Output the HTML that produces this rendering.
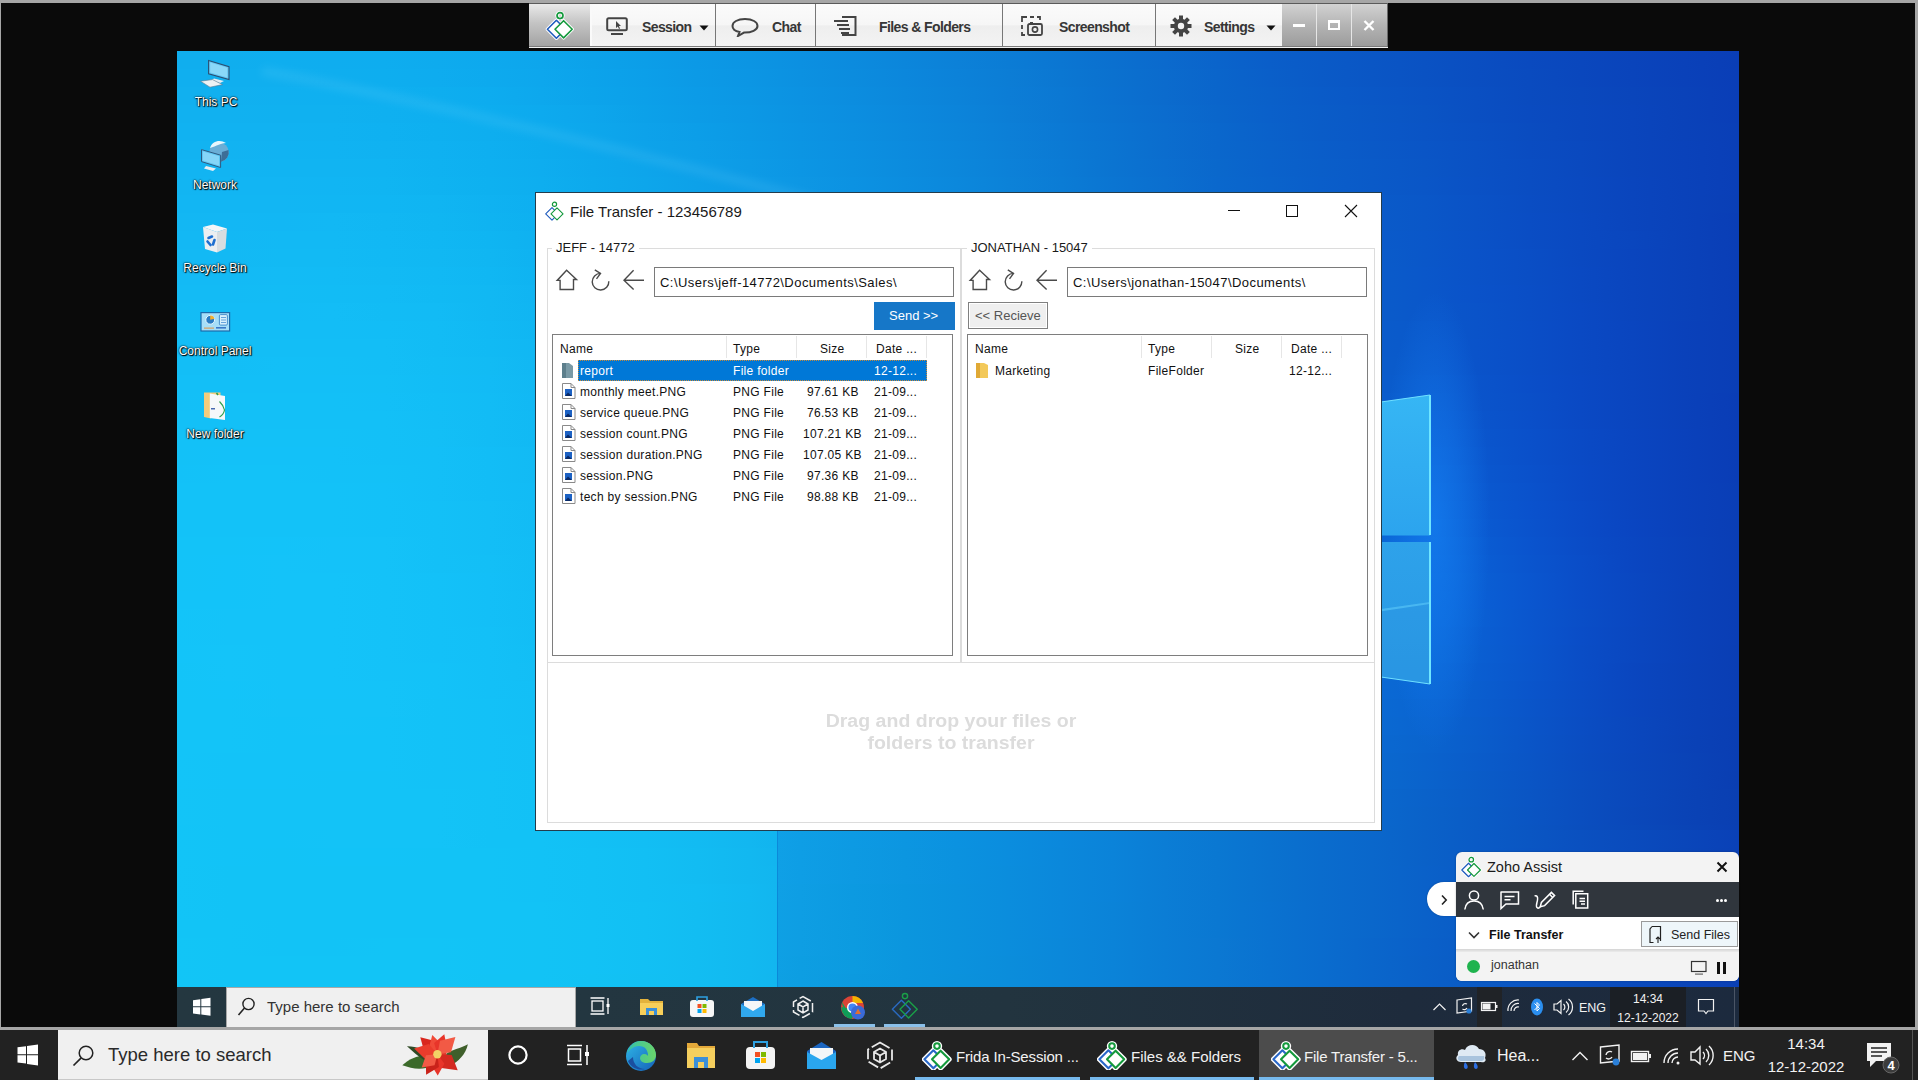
<!DOCTYPE html>
<html><head><meta charset="utf-8">
<style>
*{margin:0;padding:0;box-sizing:border-box}
html,body{width:1918px;height:1080px;overflow:hidden;background:#a6a6a6;font-family:"Liberation Sans",sans-serif}
.a{position:absolute}
svg{display:block}
#black{left:1px;top:3px;width:1914px;height:1024px;background:#0a0a0a}
#desk{left:177px;top:51px;width:1562px;height:936px;overflow:hidden}
#ltb{left:0;top:1030px;width:1918px;height:50px;background:#1f1f1f}
#rtb{left:177px;top:987px;width:1562px;height:40px;background:linear-gradient(90deg,#243842 0,#243944 700px,#1f3246 1150px,#1c2a3e 1562px)}
.t{white-space:nowrap;line-height:1}
</style></head><body>
<svg width="0" height="0" style="position:absolute">
 <defs>
  <symbol id="zlogo" viewBox="0 0 30 32">
   <circle cx="15" cy="7.6" r="3" fill="none" stroke="#fff" stroke-width="3.4"/>
   <path d="M2.4 21.3 L11.4 12.3 L20.4 21.3 L11.4 30.3 Z" fill="#fff" stroke="#fff" stroke-width="3.4" stroke-linejoin="round"/>
   <path d="M10 21.3 L18.6 12.7 L27.2 21.3 L18.6 29.9 Z" fill="#fff" stroke="#fff" stroke-width="3.4" stroke-linejoin="round"/>
   <circle cx="15" cy="7.6" r="3" fill="none" stroke="#14993c" stroke-width="1.7"/>
   <path d="M2.4 21.3 L11.4 12.3 L20.4 21.3 L11.4 30.3 Z" fill="none" stroke="#1f5bbd" stroke-width="1.6" stroke-linejoin="round"/>
   <path d="M10 21.3 L18.6 12.7 L27.2 21.3 L18.6 29.9 Z" fill="#fff" stroke="#14993c" stroke-width="1.6" stroke-linejoin="round"/>
  </symbol>
  <symbol id="zlogoT" viewBox="0 0 30 32">
   <circle cx="15" cy="8.1" r="3" fill="#fff" stroke="#fff" stroke-width="4.4"/>
   <path d="M2.4 21.3 L11.4 12.3 L20.4 21.3 L11.4 30.3 Z" fill="#fff" stroke="#fff" stroke-width="5" stroke-linejoin="round"/>
   <path d="M10 21.3 L18.6 12.7 L27.2 21.3 L18.6 29.9 Z" fill="#fff" stroke="#fff" stroke-width="5" stroke-linejoin="round"/>
   <circle cx="15" cy="8.1" r="2.8" fill="none" stroke="#14993c" stroke-width="2"/>
   <path d="M2.4 21.3 L11.4 12.3 L20.4 21.3 L11.4 30.3 Z" fill="none" stroke="#2a68c8" stroke-width="2.1" stroke-linejoin="round"/>
   <path d="M10 21.3 L18.6 12.7 L27.2 21.3 L18.6 29.9 Z" fill="#fff" stroke="#14993c" stroke-width="2.1" stroke-linejoin="round"/>
  </symbol>
  <symbol id="zlogoR" viewBox="0 0 30 32">
   <circle cx="15" cy="8.1" r="2.6" fill="none" stroke="#1aa048" stroke-width="1.4"/>
   <path d="M2.4 21.3 L11.4 12.3 L20.4 21.3 L11.4 30.3 Z" fill="none" stroke="#2a6ac0" stroke-width="1.4" stroke-linejoin="round"/>
   <path d="M10 21.3 L18.6 12.7 L27.2 21.3 L18.6 29.9 Z" fill="none" stroke="#1aa048" stroke-width="1.4" stroke-linejoin="round"/>
  </symbol>
 </defs>
</svg>
<div id="black" class="a"></div>

<!-- DESKTOP WALLPAPER -->
<div id="desk" class="a">
<div class="a" style="left:0;top:0px;width:1562px;height:18px;background:linear-gradient(90deg,#10aeee 0px,#10aeee 52px,#0faeef 104px,#0fadef 156px,#0eadef 208px,#0eabee 260px,#0da9ee 312px,#0da6ec 364px,#0ca2ea 416px,#0c9ee8 468px,#0c99e6 520px,#0c95e3 572px,#0c90e1 624px,#0c8bde 676px,#0c86db 728px,#0c81d8 780px,#0b7cd5 832px,#0b76d2 884px,#0b70cf 936px,#0b6acd 988px,#0a64cb 1040px,#0a5ec9 1092px,#0a5ac7 1144px,#0a56c5 1196px,#0a52c3 1248px,#0a4ec1 1300px,#0a4abf 1352px,#0a47bd 1404px,#0a44bb 1456px,#0a41b9 1508px,#0a3eb6 1560px,#0a3eb6 1562px)"></div>
<div class="a" style="left:0;top:18px;width:1562px;height:18px;background:linear-gradient(90deg,#10afef 0px,#10afef 52px,#10afef 104px,#0faeef 156px,#0eaeef 208px,#0eacef 260px,#0daaee 312px,#0da7ed 364px,#0ca3eb 416px,#0c9fe9 468px,#0c9ae6 520px,#0c96e4 572px,#0c91e1 624px,#0c8cde 676px,#0c87dc 728px,#0c82d9 780px,#0c7dd5 832px,#0b77d2 884px,#0b71cf 936px,#0b6bcd 988px,#0a65cb 1040px,#0a5fc9 1092px,#0a5ac7 1144px,#0a56c5 1196px,#0a52c3 1248px,#0a4ec1 1300px,#0a4bbf 1352px,#0a47bd 1404px,#0a44bb 1456px,#0a41b9 1508px,#0a3eb7 1560px,#0a3eb6 1562px)"></div>
<div class="a" style="left:0;top:36px;width:1562px;height:18px;background:linear-gradient(90deg,#11b0ef 0px,#11b0ef 52px,#10b0f0 104px,#0fb0f0 156px,#0faff0 208px,#0eaeef 260px,#0dacef 312px,#0da8ed 364px,#0ca4eb 416px,#0ca0e9 468px,#0c9be7 520px,#0c97e4 572px,#0c92e2 624px,#0c8ddf 676px,#0c88dc 728px,#0c83d9 780px,#0c7dd6 832px,#0b78d3 884px,#0b71d0 936px,#0b6bcd 988px,#0a65cb 1040px,#0a60c9 1092px,#0a5bc8 1144px,#0a57c6 1196px,#0a53c4 1248px,#0a4fc2 1300px,#0a4bbf 1352px,#0a48bd 1404px,#0a45bb 1456px,#0a42b9 1508px,#0a3eb7 1560px,#0a3eb7 1562px)"></div>
<div class="a" style="left:0;top:54px;width:1562px;height:18px;background:linear-gradient(90deg,#11b1f0 0px,#11b1f0 52px,#10b1f0 104px,#10b1f0 156px,#0fb0f0 208px,#0eaff0 260px,#0dadef 312px,#0daaee 364px,#0da6ec 416px,#0ca1e9 468px,#0c9ce7 520px,#0c98e5 572px,#0c93e2 624px,#0c8ee0 676px,#0c89dd 728px,#0c84da 780px,#0c7ed6 832px,#0b78d3 884px,#0b72d0 936px,#0b6cce 988px,#0a66cb 1040px,#0a60ca 1092px,#0a5cc8 1144px,#0a58c6 1196px,#0a54c4 1248px,#0a4fc2 1300px,#0a4bc0 1352px,#0a48be 1404px,#0a45bc 1456px,#0a42b9 1508px,#0a3eb7 1560px,#0a3eb7 1562px)"></div>
<div class="a" style="left:0;top:72px;width:1562px;height:18px;background:linear-gradient(90deg,#11b2f1 0px,#11b2f1 52px,#11b2f1 104px,#10b2f1 156px,#0fb1f1 208px,#0eb0f0 260px,#0eaeef 312px,#0dabee 364px,#0da7ec 416px,#0da2ea 468px,#0c9ee8 520px,#0c99e5 572px,#0c94e3 624px,#0c8fe0 676px,#0c8add 728px,#0c85da 780px,#0c7fd7 832px,#0b79d4 884px,#0b73d1 936px,#0b6dce 988px,#0a67cc 1040px,#0a61ca 1092px,#0a5cc8 1144px,#0a58c7 1196px,#0a54c5 1248px,#0a50c3 1300px,#0a4cc0 1352px,#0a48be 1404px,#0a45bc 1456px,#0a42b9 1508px,#0a3fb7 1560px,#0a3eb7 1562px)"></div>
<div class="a" style="left:0;top:90px;width:1562px;height:18px;background:linear-gradient(90deg,#12b3f1 0px,#12b3f1 52px,#11b3f2 104px,#10b3f2 156px,#10b2f1 208px,#0fb1f1 260px,#0eaff0 312px,#0dacee 364px,#0da8ed 416px,#0da3ea 468px,#0d9fe8 520px,#0c9ae6 572px,#0c95e3 624px,#0c90e1 676px,#0c8bde 728px,#0c86db 780px,#0c80d7 832px,#0b7ad4 884px,#0b74d1 936px,#0b6dce 988px,#0a67cc 1040px,#0a62ca 1092px,#0a5dc9 1144px,#0a59c7 1196px,#0a55c6 1248px,#0a51c4 1300px,#0a4cc1 1352px,#0a49bf 1404px,#0a45bc 1456px,#0a42ba 1508px,#0a3fb7 1560px,#0a3eb7 1562px)"></div>
<div class="a" style="left:0;top:108px;width:1562px;height:18px;background:linear-gradient(90deg,#12b4f2 0px,#12b4f2 52px,#11b4f2 104px,#11b4f2 156px,#10b4f2 208px,#0fb2f1 260px,#0eb0f0 312px,#0eadef 364px,#0da9ed 416px,#0da5eb 468px,#0da0e9 520px,#0d9be6 572px,#0c96e4 624px,#0c91e1 676px,#0c8cde 728px,#0c87db 780px,#0c81d8 832px,#0b7bd5 884px,#0b74d1 936px,#0b6ecf 988px,#0a68cc 1040px,#0a62cb 1092px,#0a5ec9 1144px,#0a5ac8 1196px,#0a56c6 1248px,#0a51c4 1300px,#0a4dc2 1352px,#0a49bf 1404px,#0a45bc 1456px,#0a42ba 1508px,#0a3fb7 1560px,#0a3eb6 1562px)"></div>
<div class="a" style="left:0;top:126px;width:1562px;height:18px;background:linear-gradient(90deg,#12b5f2 0px,#12b5f3 52px,#12b5f3 104px,#11b5f3 156px,#10b5f2 208px,#0fb3f1 260px,#0eb1f0 312px,#0eaeef 364px,#0daaed 416px,#0da6eb 468px,#0da1e9 520px,#0d9ce7 572px,#0d97e4 624px,#0c92e2 676px,#0c8ddf 728px,#0c88dc 780px,#0c82d8 832px,#0b7cd5 884px,#0b75d2 936px,#0b6fcf 988px,#0a68cd 1040px,#0a63cb 1092px,#0a5eca 1144px,#0a5ac8 1196px,#0a56c7 1248px,#0a51c5 1300px,#0a4dc2 1352px,#0a49c0 1404px,#0a45bd 1456px,#0a42ba 1508px,#0a3fb7 1560px,#0a3eb6 1562px)"></div>
<div class="a" style="left:0;top:144px;width:1562px;height:18px;background:linear-gradient(90deg,#12b6f3 0px,#12b6f3 52px,#12b6f3 104px,#11b6f3 156px,#10b6f3 208px,#10b5f2 260px,#0fb2f1 312px,#0eaff0 364px,#0eabee 416px,#0da7ec 468px,#0da2ea 520px,#0d9de7 572px,#0d98e5 624px,#0d93e2 676px,#0c8edf 728px,#0c89dc 780px,#0c83d9 832px,#0c7cd5 884px,#0b76d2 936px,#0b6fcf 988px,#0a69cd 1040px,#0a64cb 1092px,#0a5fca 1144px,#0a5bc9 1196px,#0a57c8 1248px,#0a52c6 1300px,#0a4dc3 1352px,#0a49c0 1404px,#0a45bd 1456px,#0a42ba 1508px,#0a3fb6 1560px,#0a3eb6 1562px)"></div>
<div class="a" style="left:0;top:162px;width:1562px;height:18px;background:linear-gradient(90deg,#13b7f3 0px,#13b7f4 52px,#12b7f4 104px,#12b8f4 156px,#11b7f3 208px,#10b6f2 260px,#0fb3f1 312px,#0eb0f0 364px,#0eacee 416px,#0ea8ec 468px,#0da3ea 520px,#0d9ee8 572px,#0d99e5 624px,#0d94e3 676px,#0c8fe0 728px,#0c8add 780px,#0c84d9 832px,#0c7dd6 884px,#0b76d3 936px,#0b70d0 988px,#0a6acd 1040px,#0a64cb 1092px,#0a5fca 1144px,#0a5bc9 1196px,#0a57c8 1248px,#0a52c6 1300px,#0a4dc4 1352px,#0a49c1 1404px,#0a45bd 1456px,#0a42ba 1508px,#0a3eb6 1560px,#0a3eb6 1562px)"></div>
<div class="a" style="left:0;top:180px;width:1562px;height:18px;background:linear-gradient(90deg,#13b8f4 0px,#13b8f4 52px,#12b9f4 104px,#12b9f4 156px,#11b8f4 208px,#10b7f3 260px,#0fb5f2 312px,#0fb1f0 364px,#0eadef 416px,#0ea9ed 468px,#0da4eb 520px,#0d9fe8 572px,#0d9ae6 624px,#0d95e3 676px,#0c90e0 728px,#0c8add 780px,#0c84da 832px,#0c7ed6 884px,#0b77d3 936px,#0b70d0 988px,#0a6acd 1040px,#0a64cb 1092px,#0a60ca 1144px,#0a5bca 1196px,#0a57c9 1248px,#0a52c7 1300px,#0a4dc4 1352px,#0a49c1 1404px,#0a46be 1456px,#0a42ba 1508px,#0a3eb6 1560px,#0a3eb6 1562px)"></div>
<div class="a" style="left:0;top:198px;width:1562px;height:18px;background:linear-gradient(90deg,#13b9f4 0px,#13b9f4 52px,#12baf4 104px,#12baf4 156px,#11b9f4 208px,#11b8f3 260px,#10b6f2 312px,#0fb2f1 364px,#0eaeef 416px,#0eaaed 468px,#0ea5eb 520px,#0da0e9 572px,#0d9be6 624px,#0d96e3 676px,#0c91e1 728px,#0c8bde 780px,#0c85da 832px,#0c7fd7 884px,#0b78d3 936px,#0b71d0 988px,#0a6acd 1040px,#0a65cb 1092px,#0a60ca 1144px,#0a5cca 1196px,#0a57c9 1248px,#0a52c8 1300px,#0a4ec5 1352px,#0a49c1 1404px,#0a45be 1456px,#0a42ba 1508px,#0a3eb6 1560px,#0a3eb6 1562px)"></div>
<div class="a" style="left:0;top:216px;width:1562px;height:18px;background:linear-gradient(90deg,#13baf5 0px,#13baf5 52px,#13bbf5 104px,#12bbf5 156px,#12baf4 208px,#11b9f4 260px,#10b7f3 312px,#0fb3f1 364px,#0fafef 416px,#0eabee 468px,#0ea6eb 520px,#0da1e9 572px,#0d9ce7 624px,#0d97e4 676px,#0d92e1 728px,#0c8cde 780px,#0c86db 832px,#0c7fd7 884px,#0b78d4 936px,#0b71d0 988px,#0a6bce 1040px,#0a65cc 1092px,#0a60cb 1144px,#0a5cca 1196px,#0a57ca 1248px,#0a52c8 1300px,#0a4ec5 1352px,#0a49c2 1404px,#0a45be 1456px,#0a42ba 1508px,#0a3eb6 1560px,#0a3eb6 1562px)"></div>
<div class="a" style="left:0;top:234px;width:1562px;height:18px;background:linear-gradient(90deg,#13bbf5 0px,#13bbf5 52px,#13bcf5 104px,#12bcf5 156px,#12bbf5 208px,#11baf4 260px,#11b8f3 312px,#10b4f2 364px,#0fb0f0 416px,#0eacee 468px,#0ea7ec 520px,#0da2e9 572px,#0d9de7 624px,#0d98e4 676px,#0d92e2 728px,#0c8ddf 780px,#0c87db 832px,#0c80d8 884px,#0b79d4 936px,#0b72d0 988px,#0a6bce 1040px,#0a65cc 1092px,#0a60cb 1144px,#0a5cca 1196px,#0a57ca 1248px,#0a52c9 1300px,#0a4ec6 1352px,#0a49c2 1404px,#0a45be 1456px,#0a42ba 1508px,#0a3eb6 1560px,#0a3eb6 1562px)"></div>
<div class="a" style="left:0;top:252px;width:1562px;height:18px;background:linear-gradient(90deg,#13bcf5 0px,#13bcf6 52px,#13bcf6 104px,#13bdf6 156px,#12bcf5 208px,#12bbf5 260px,#11b8f3 312px,#10b5f2 364px,#0fb1f0 416px,#0fadee 468px,#0ea8ec 520px,#0ea3ea 572px,#0d9ee7 624px,#0d98e5 676px,#0d93e2 728px,#0c8ddf 780px,#0c87dc 832px,#0c80d8 884px,#0b79d4 936px,#0b72d1 988px,#0a6cce 1040px,#0a66cc 1092px,#0a60cb 1144px,#0a5cca 1196px,#0a57ca 1248px,#0a53c9 1300px,#0a4ec6 1352px,#0a49c3 1404px,#0a45be 1456px,#0a42ba 1508px,#0a3eb6 1560px,#0a3eb6 1562px)"></div>
<div class="a" style="left:0;top:270px;width:1562px;height:18px;background:linear-gradient(90deg,#13bdf6 0px,#13bdf6 52px,#13bdf6 104px,#13bdf6 156px,#12bdf6 208px,#12bcf5 260px,#11b9f4 312px,#10b6f2 364px,#0fb2f1 416px,#0fadef 468px,#0ea9ec 520px,#0ea4ea 572px,#0d9ee8 624px,#0d99e5 676px,#0d94e2 728px,#0c8edf 780px,#0c88dc 832px,#0c81d8 884px,#0b7ad4 936px,#0b73d1 988px,#0a6cce 1040px,#0a66cc 1092px,#0a61cb 1144px,#0a5ccb 1196px,#0a58cb 1248px,#0a53c9 1300px,#0a4ec7 1352px,#0a49c3 1404px,#0a45bf 1456px,#0a41ba 1508px,#0a3eb6 1560px,#0a3eb6 1562px)"></div>
<div class="a" style="left:0;top:288px;width:1562px;height:18px;background:linear-gradient(90deg,#13bdf6 0px,#13bef6 52px,#13bef6 104px,#13bef6 156px,#13bef6 208px,#12bcf5 260px,#11baf4 312px,#11b7f3 364px,#10b3f1 416px,#0faeef 468px,#0ea9ed 520px,#0ea4ea 572px,#0d9fe8 624px,#0d9ae5 676px,#0d94e2 728px,#0c8edf 780px,#0c88dc 832px,#0c81d8 884px,#0b7ad5 936px,#0b73d1 988px,#0a6cce 1040px,#0a66cc 1092px,#0a61cb 1144px,#0a5ccb 1196px,#0a58cb 1248px,#0a53ca 1300px,#0a4ec7 1352px,#0a49c3 1404px,#0a45bf 1456px,#0a41ba 1508px,#0a3eb6 1560px,#0a3eb6 1562px)"></div>
<div class="a" style="left:0;top:306px;width:1562px;height:18px;background:linear-gradient(90deg,#13bef6 0px,#13bef6 52px,#13bff7 104px,#13bff6 156px,#13bef6 208px,#12bdf5 260px,#12bbf4 312px,#11b7f3 364px,#10b3f1 416px,#0fafef 468px,#0faaed 520px,#0ea5eb 572px,#0da0e8 624px,#0d9ae6 676px,#0d95e3 728px,#0c8fe0 780px,#0c89dc 832px,#0b82d9 884px,#0b7bd5 936px,#0b74d1 988px,#0a6dce 1040px,#0a66cc 1092px,#0a61cb 1144px,#0a5dcb 1196px,#0a58cb 1248px,#0a53ca 1300px,#0a4ec7 1352px,#0a49c3 1404px,#0a45bf 1456px,#0a41ba 1508px,#0a3eb6 1560px,#0a3db6 1562px)"></div>
<div class="a" style="left:0;top:324px;width:1562px;height:18px;background:linear-gradient(90deg,#13bff7 0px,#13bff7 52px,#13bff7 104px,#13bff7 156px,#13bff6 208px,#12bdf6 260px,#12bbf5 312px,#11b8f3 364px,#10b4f2 416px,#0faff0 468px,#0fabed 520px,#0ea6eb 572px,#0ea0e9 624px,#0d9be6 676px,#0d95e3 728px,#0c8fe0 780px,#0c89dc 832px,#0b82d9 884px,#0b7bd5 936px,#0b74d2 988px,#0a6dcf 1040px,#0a67cc 1092px,#0a62cc 1144px,#0a5dcc 1196px,#0a59cc 1248px,#0a54cb 1300px,#0a4ec8 1352px,#0a49c4 1404px,#0a45bf 1456px,#0a41ba 1508px,#0a3eb6 1560px,#0a3db6 1562px)"></div>
<div class="a" style="left:0;top:342px;width:1562px;height:18px;background:linear-gradient(90deg,#13bff7 0px,#13c0f7 52px,#13c0f7 104px,#13c0f7 156px,#13bff7 208px,#12bef6 260px,#12bcf5 312px,#11b8f4 364px,#10b4f2 416px,#10b0f0 468px,#0fabee 520px,#0ea6eb 572px,#0ea1e9 624px,#0d9ce6 676px,#0d96e3 728px,#0c90e0 780px,#0c89dd 832px,#0b83d9 884px,#0b7cd5 936px,#0b75d2 988px,#0a6ecf 1040px,#0a67cd 1092px,#0a62cc 1144px,#0a5ecd 1196px,#0a5acd 1248px,#0a54cb 1300px,#0a4fc8 1352px,#0a49c4 1404px,#0a45bf 1456px,#0a41ba 1508px,#0a3db6 1560px,#0a3db6 1562px)"></div>
<div class="a" style="left:0;top:360px;width:1562px;height:18px;background:linear-gradient(90deg,#13c0f7 0px,#13c0f7 52px,#13c0f7 104px,#13c0f7 156px,#13c0f7 208px,#13bef6 260px,#12bcf5 312px,#11b9f4 364px,#10b5f2 416px,#10b1f0 468px,#0facee 520px,#0ea7ec 572px,#0ea2e9 624px,#0d9ce6 676px,#0d96e3 728px,#0c90e0 780px,#0c8add 832px,#0b83d9 884px,#0b7cd6 936px,#0b75d3 988px,#0a6fd0 1040px,#0a68ce 1092px,#0a63cd 1144px,#0a5fce 1196px,#0a5ace 1248px,#0a55cc 1300px,#0a4fc9 1352px,#0a49c4 1404px,#0a45bf 1456px,#0a41ba 1508px,#0a3db6 1560px,#0a3db6 1562px)"></div>
<div class="a" style="left:0;top:378px;width:1562px;height:18px;background:linear-gradient(90deg,#13c1f7 0px,#13c1f7 52px,#13c1f7 104px,#13c1f7 156px,#13c0f7 208px,#13bff6 260px,#12bcf5 312px,#11b9f4 364px,#11b6f2 416px,#10b1f0 468px,#0fadee 520px,#0ea7ec 572px,#0ea2e9 624px,#0d9de6 676px,#0d97e3 728px,#0c91e0 780px,#0c8add 832px,#0b83d9 884px,#0b7dd6 936px,#0b76d3 988px,#0a6fd0 1040px,#0a69cf 1092px,#0a64ce 1144px,#0a60cf 1196px,#0a5bcf 1248px,#0a56cd 1300px,#0a50ca 1352px,#0a4ac5 1404px,#0a45c0 1456px,#0a41bb 1508px,#0a3db6 1560px,#0a3db6 1562px)"></div>
<div class="a" style="left:0;top:396px;width:1562px;height:18px;background:linear-gradient(90deg,#13c1f7 0px,#13c1f8 52px,#13c1f8 104px,#13c1f8 156px,#13c0f7 208px,#13bff7 260px,#12bdf6 312px,#12baf4 364px,#11b6f3 416px,#10b2f1 468px,#0fadee 520px,#0ea8ec 572px,#0ea3e9 624px,#0d9de7 676px,#0d97e4 728px,#0c91e0 780px,#0c8bdd 832px,#0b84da 884px,#0b7dd6 936px,#0b76d4 988px,#0a70d1 1040px,#0a6acf 1092px,#0a65cf 1144px,#0a61d0 1196px,#0a5cd0 1248px,#0a57ce 1300px,#0a50ca 1352px,#0a4ac5 1404px,#0a45c0 1456px,#0a41bb 1508px,#0a3db6 1560px,#0a3db6 1562px)"></div>
<div class="a" style="left:0;top:414px;width:1562px;height:18px;background:linear-gradient(90deg,#13c1f8 0px,#13c2f8 52px,#13c2f8 104px,#13c1f8 156px,#13c1f7 208px,#13bff7 260px,#12bdf6 312px,#12baf4 364px,#11b7f3 416px,#10b2f1 468px,#0faeef 520px,#0fa9ec 572px,#0ea3ea 624px,#0d9de7 676px,#0d98e4 728px,#0c91e1 780px,#0c8bdd 832px,#0b84da 884px,#0b7ed7 936px,#0b77d4 988px,#0a71d2 1040px,#0a6bd1 1092px,#0a67d0 1144px,#0a62d1 1196px,#0a5ed1 1248px,#0a58cf 1300px,#0a51cb 1352px,#0a4ac6 1404px,#0a45c0 1456px,#0a41bb 1508px,#0a3db6 1560px,#0a3db6 1562px)"></div>
<div class="a" style="left:0;top:432px;width:1562px;height:18px;background:linear-gradient(90deg,#13c2f8 0px,#13c2f8 52px,#13c2f8 104px,#13c2f8 156px,#13c1f8 208px,#13bff7 260px,#12bdf6 312px,#12bbf5 364px,#11b7f3 416px,#10b3f1 468px,#0faeef 520px,#0fa9ec 572px,#0ea4ea 624px,#0d9ee7 676px,#0d98e4 728px,#0c92e1 780px,#0c8bdd 832px,#0b85da 884px,#0b7ed7 936px,#0b78d5 988px,#0a72d3 1040px,#0a6cd2 1092px,#0a68d1 1144px,#0a64d2 1196px,#0a5fd2 1248px,#0a59d0 1300px,#0a52cc 1352px,#0a4ac6 1404px,#0a45c0 1456px,#0a41bb 1508px,#0a3eb6 1560px,#0a3db5 1562px)"></div>
<div class="a" style="left:0;top:450px;width:1562px;height:18px;background:linear-gradient(90deg,#13c2f8 0px,#13c2f8 52px,#13c2f8 104px,#13c2f8 156px,#13c1f8 208px,#13c0f7 260px,#13bef6 312px,#12bbf5 364px,#11b7f3 416px,#10b3f1 468px,#10afef 520px,#0faaed 572px,#0ea4ea 624px,#0d9ee7 676px,#0d98e4 728px,#0c92e1 780px,#0c8cde 832px,#0b85da 884px,#0b7fd7 936px,#0b78d5 988px,#0a73d3 1040px,#0a6dd2 1092px,#0a69d3 1144px,#0a65d3 1196px,#0a60d3 1248px,#0a5ad1 1300px,#0a52cd 1352px,#0a4bc7 1404px,#0a45c0 1456px,#0a41bb 1508px,#0a3eb6 1560px,#0a3eb5 1562px)"></div>
<div class="a" style="left:0;top:468px;width:1562px;height:18px;background:linear-gradient(90deg,#13c2f8 0px,#13c2f8 52px,#13c2f8 104px,#13c2f8 156px,#13c1f8 208px,#13c0f7 260px,#13bef6 312px,#12bbf5 364px,#11b8f3 416px,#11b4f1 468px,#10afef 520px,#0faaed 572px,#0ea5ea 624px,#0e9fe7 676px,#0d99e4 728px,#0c93e1 780px,#0c8cde 832px,#0b86db 884px,#0b7fd8 936px,#0a79d6 988px,#0a73d4 1040px,#0a6ed3 1092px,#0a6ad4 1144px,#0a66d4 1196px,#0a62d4 1248px,#0a5bd2 1300px,#0a53cd 1352px,#0a4bc7 1404px,#0a45c1 1456px,#0a41bb 1508px,#0a3eb5 1560px,#0a3eb5 1562px)"></div>
<div class="a" style="left:0;top:486px;width:1562px;height:18px;background:linear-gradient(90deg,#13c3f8 0px,#13c3f8 52px,#13c3f9 104px,#14c2f9 156px,#14c2f8 208px,#13c0f7 260px,#13bef6 312px,#12bcf5 364px,#11b8f3 416px,#11b4f2 468px,#10b0ef 520px,#0fabed 572px,#0ea5ea 624px,#0ea0e7 676px,#0d99e4 728px,#0c93e1 780px,#0c8cde 832px,#0b86db 884px,#0b80d8 936px,#0a7ad6 988px,#0a74d5 1040px,#0a6fd4 1092px,#0a6bd4 1144px,#0a67d5 1196px,#0a63d5 1248px,#0a5dd3 1300px,#0a54ce 1352px,#0a4cc7 1404px,#0a46c1 1456px,#0a42bb 1508px,#0a3eb5 1560px,#0a3eb5 1562px)"></div>
<div class="a" style="left:0;top:504px;width:1562px;height:18px;background:linear-gradient(90deg,#13c3f8 0px,#13c3f9 52px,#14c3f9 104px,#14c2f9 156px,#14c2f8 208px,#13c0f7 260px,#13bff6 312px,#12bcf5 364px,#11b9f3 416px,#11b5f2 468px,#10b1f0 520px,#0faced 572px,#0ea6eb 624px,#0ea0e8 676px,#0d9ae4 728px,#0c93e1 780px,#0c8dde 832px,#0b86db 884px,#0b80d8 936px,#0a7ad6 988px,#0a75d5 1040px,#0a70d5 1092px,#0a6cd5 1144px,#0a68d6 1196px,#0a64d6 1248px,#0a5ed4 1300px,#0a55ce 1352px,#0a4dc8 1404px,#0a46c1 1456px,#0a42bb 1508px,#0a3eb5 1560px,#0a3eb5 1562px)"></div>
<div class="a" style="left:0;top:522px;width:1562px;height:18px;background:linear-gradient(90deg,#13c3f8 0px,#13c3f9 52px,#14c3f9 104px,#14c3f9 156px,#14c2f8 208px,#13c1f8 260px,#13bff7 312px,#12bcf5 364px,#12b9f4 416px,#11b6f2 468px,#10b1f0 520px,#0faced 572px,#0fa7eb 624px,#0ea1e8 676px,#0d9ae5 728px,#0d94e1 780px,#0c8dde 832px,#0b87db 884px,#0b80d9 936px,#0a7bd7 988px,#0a75d5 1040px,#0a71d5 1092px,#0a6dd6 1144px,#0a69d7 1196px,#0a65d7 1248px,#0a5fd4 1300px,#0a56cf 1352px,#0a4dc8 1404px,#0a47c1 1456px,#0a42bb 1508px,#0a3eb5 1560px,#0a3eb5 1562px)"></div>
<div class="a" style="left:0;top:540px;width:1562px;height:18px;background:linear-gradient(90deg,#13c3f9 0px,#13c3f9 52px,#14c3f9 104px,#14c3f9 156px,#14c2f8 208px,#13c1f8 260px,#13bff7 312px,#12bdf5 364px,#12baf4 416px,#11b6f2 468px,#10b2f0 520px,#10adee 572px,#0fa7eb 624px,#0ea1e8 676px,#0d9be5 728px,#0d94e1 780px,#0c8ede 832px,#0b87db 884px,#0b81d9 936px,#0a7bd7 988px,#0a76d6 1040px,#0a71d6 1092px,#0a6ed6 1144px,#0a6ad7 1196px,#0a66d7 1248px,#0a5fd5 1300px,#0a56cf 1352px,#0a4dc8 1404px,#0a47c1 1456px,#0a42ba 1508px,#0a3eb5 1560px,#0a3eb5 1562px)"></div>
<div class="a" style="left:0;top:558px;width:1562px;height:18px;background:linear-gradient(90deg,#13c4f9 0px,#14c3f9 52px,#14c3f9 104px,#14c3f9 156px,#14c2f8 208px,#13c1f8 260px,#13bff7 312px,#12bdf5 364px,#12baf4 416px,#11b7f2 468px,#10b2f0 520px,#10aeee 572px,#0fa8eb 624px,#0ea2e8 676px,#0d9be5 728px,#0d95e1 780px,#0c8ede 832px,#0b87db 884px,#0b81d9 936px,#0a7bd7 988px,#0a76d6 1040px,#0a72d6 1092px,#0a6ed6 1144px,#0a6ad7 1196px,#0a66d7 1248px,#0a60d4 1300px,#0a56ce 1352px,#0a4ec7 1404px,#0a47c1 1456px,#0a42ba 1508px,#0a3eb5 1560px,#0a3eb5 1562px)"></div>
<div class="a" style="left:0;top:576px;width:1562px;height:18px;background:linear-gradient(90deg,#13c4f9 0px,#14c3f9 52px,#14c3f9 104px,#14c3f9 156px,#14c2f8 208px,#13c1f8 260px,#13c0f7 312px,#12bdf5 364px,#12bbf4 416px,#11b7f2 468px,#11b3f0 520px,#10aeee 572px,#0fa9eb 624px,#0ea3e8 676px,#0d9ce5 728px,#0d95e1 780px,#0c8ede 832px,#0b87db 884px,#0b81d9 936px,#0a7cd7 988px,#0a77d6 1040px,#0a72d6 1092px,#0a6ed6 1144px,#0a6bd6 1196px,#0a66d6 1248px,#0a5fd3 1300px,#0a56ce 1352px,#0a4dc7 1404px,#0a47c0 1456px,#0a42ba 1508px,#0a3eb5 1560px,#0a3eb5 1562px)"></div>
<div class="a" style="left:0;top:594px;width:1562px;height:18px;background:linear-gradient(90deg,#13c4f9 0px,#14c4f9 52px,#14c3f9 104px,#14c3f9 156px,#14c2f8 208px,#13c1f8 260px,#13c0f7 312px,#12bef5 364px,#12bbf4 416px,#11b8f2 468px,#11b4f0 520px,#10afee 572px,#0fa9eb 624px,#0ea3e8 676px,#0e9de5 728px,#0d96e2 780px,#0c8ede 832px,#0b88db 884px,#0b81d9 936px,#0a7cd7 988px,#0a77d6 1040px,#0a73d6 1092px,#0a6fd6 1144px,#0a6bd6 1196px,#0a66d5 1248px,#0a5fd2 1300px,#0a56cd 1352px,#0a4dc6 1404px,#0a47c0 1456px,#0a42ba 1508px,#0a3eb4 1560px,#0a3eb4 1562px)"></div>
<div class="a" style="left:0;top:612px;width:1562px;height:18px;background:linear-gradient(90deg,#13c4f8 0px,#14c4f9 52px,#14c3f9 104px,#14c3f9 156px,#14c2f8 208px,#13c2f8 260px,#13c0f7 312px,#13bef5 364px,#12bcf4 416px,#11b8f2 468px,#11b5f1 520px,#10b0ee 572px,#0faaeb 624px,#0fa4e8 676px,#0e9de5 728px,#0d96e2 780px,#0c8fde 832px,#0b88db 884px,#0b82d9 936px,#0a7cd7 988px,#0a77d6 1040px,#0a73d5 1092px,#0a6fd5 1144px,#0a6bd5 1196px,#0a65d4 1248px,#0a5ed1 1300px,#0a56cc 1352px,#0a4dc6 1404px,#0a46bf 1456px,#0a42b9 1508px,#0a3eb4 1560px,#0a3db4 1562px)"></div>
<div class="a" style="left:0;top:630px;width:1562px;height:18px;background:linear-gradient(90deg,#13c4f8 0px,#13c4f9 52px,#14c3f9 104px,#14c3f9 156px,#14c3f8 208px,#13c2f8 260px,#13c0f7 312px,#13bff6 364px,#12bcf4 416px,#12b9f3 468px,#11b5f1 520px,#10b1ee 572px,#10abec 624px,#0fa5e9 676px,#0e9ee5 728px,#0d96e2 780px,#0c8fde 832px,#0b88db 884px,#0b82d9 936px,#0a7cd7 988px,#0a77d6 1040px,#0a73d5 1092px,#0a6fd5 1144px,#0a6ad4 1196px,#0a65d3 1248px,#0a5ecf 1300px,#0a55cb 1352px,#0a4dc5 1404px,#0a46bf 1456px,#0a42b9 1508px,#0a3eb4 1560px,#0a3eb4 1562px)"></div>
<div class="a" style="left:0;top:648px;width:1562px;height:18px;background:linear-gradient(90deg,#13c4f8 0px,#13c4f8 52px,#14c3f8 104px,#14c3f8 156px,#14c3f8 208px,#13c2f7 260px,#13c1f7 312px,#13bff6 364px,#12bdf4 416px,#12baf3 468px,#11b6f1 520px,#10b1ef 572px,#10acec 624px,#0fa5e9 676px,#0e9ee5 728px,#0d97e2 780px,#0c8fde 832px,#0b88db 884px,#0b82d8 936px,#0a7cd7 988px,#0a77d5 1040px,#0a73d4 1092px,#0a6fd4 1144px,#0a6ad3 1196px,#0a64d1 1248px,#0a5dce 1300px,#0a55c9 1352px,#0a4dc4 1404px,#0a46be 1456px,#0a42b8 1508px,#0a3eb4 1560px,#0a3eb3 1562px)"></div>
<div class="a" style="left:0;top:666px;width:1562px;height:18px;background:linear-gradient(90deg,#13c4f8 0px,#13c4f8 52px,#13c3f8 104px,#14c3f8 156px,#13c3f8 208px,#13c2f7 260px,#13c1f7 312px,#13bff6 364px,#12bdf4 416px,#12baf3 468px,#11b7f1 520px,#11b2ef 572px,#10adec 624px,#0fa6e9 676px,#0e9fe5 728px,#0d97e2 780px,#0c90de 832px,#0b88db 884px,#0b82d8 936px,#0a7cd6 988px,#0a77d5 1040px,#0a73d4 1092px,#0a6ed3 1144px,#0a6ad2 1196px,#0a64d0 1248px,#0a5dcc 1300px,#0a55c8 1352px,#0a4dc3 1404px,#0a47bd 1456px,#0a42b8 1508px,#0a3eb3 1560px,#0a3eb3 1562px)"></div>
<div class="a" style="left:0;top:684px;width:1562px;height:18px;background:linear-gradient(90deg,#13c4f8 0px,#13c4f8 52px,#13c3f8 104px,#13c3f8 156px,#13c3f8 208px,#13c2f7 260px,#13c1f7 312px,#13c0f6 364px,#12bef4 416px,#12bbf3 468px,#11b7f1 520px,#11b3ef 572px,#10adec 624px,#0fa7e9 676px,#0e9fe5 728px,#0d98e2 780px,#0c90de 832px,#0b89db 884px,#0b82d8 936px,#0a7cd6 988px,#0a77d5 1040px,#0a73d3 1092px,#0a6ed2 1144px,#0a69d1 1196px,#0a64ce 1248px,#0a5dcb 1300px,#0a55c7 1352px,#0a4dc2 1404px,#0a47bd 1456px,#0a42b7 1508px,#0a3eb3 1560px,#0a3eb3 1562px)"></div>
<div class="a" style="left:0;top:702px;width:1562px;height:18px;background:linear-gradient(90deg,#13c4f8 0px,#13c3f8 52px,#13c3f8 104px,#13c3f8 156px,#13c3f8 208px,#13c2f7 260px,#13c1f7 312px,#13c0f6 364px,#12bef5 416px,#12bcf3 468px,#11b8f1 520px,#11b4ef 572px,#10aeec 624px,#0fa7e9 676px,#0ea0e6 728px,#0d98e2 780px,#0c90de 832px,#0b89db 884px,#0b82d8 936px,#0a7cd6 988px,#0a77d4 1040px,#0a73d3 1092px,#0a6ed1 1144px,#0a69cf 1196px,#0a63cd 1248px,#0a5cca 1300px,#0a55c6 1352px,#0a4dc1 1404px,#0a47bc 1456px,#0a43b7 1508px,#0a3eb3 1560px,#0a3eb3 1562px)"></div>
<div class="a" style="left:0;top:720px;width:1562px;height:18px;background:linear-gradient(90deg,#13c4f8 0px,#13c3f8 52px,#13c3f8 104px,#13c3f7 156px,#13c3f7 208px,#13c2f7 260px,#13c2f6 312px,#12c1f6 364px,#12bff5 416px,#12bcf3 468px,#12b9f2 520px,#11b5ef 572px,#11afed 624px,#10a8e9 676px,#0fa1e6 728px,#0e99e2 780px,#0c91de 832px,#0c89da 884px,#0b82d8 936px,#0a7dd5 988px,#0a78d4 1040px,#0a73d2 1092px,#0a6ed1 1144px,#0a69ce 1196px,#0a63cc 1248px,#0a5cc8 1300px,#0a55c5 1352px,#0a4ec0 1404px,#0a48bb 1456px,#0a43b7 1508px,#0a3eb2 1560px,#0a3eb2 1562px)"></div>
<div class="a" style="left:0;top:738px;width:1562px;height:18px;background:linear-gradient(90deg,#13c4f7 0px,#13c3f7 52px,#13c3f7 104px,#13c3f7 156px,#13c3f7 208px,#13c3f7 260px,#13c2f6 312px,#12c1f6 364px,#12bff5 416px,#12bdf4 468px,#12baf2 520px,#11b5f0 572px,#11b0ed 624px,#10a9e9 676px,#0fa1e6 728px,#0e99e2 780px,#0d91de 832px,#0c89da 884px,#0b82d7 936px,#0a7dd5 988px,#0a78d3 1040px,#0a73d2 1092px,#0a6ed0 1144px,#0a68cd 1196px,#0a62ca 1248px,#0a5cc7 1300px,#0a55c4 1352px,#0a4ebf 1404px,#0a48bb 1456px,#0a43b6 1508px,#0a3fb2 1560px,#0a3fb2 1562px)"></div>
<div class="a" style="left:0;top:756px;width:1562px;height:18px;background:linear-gradient(90deg,#13c4f7 0px,#13c3f7 52px,#13c3f7 104px,#13c3f7 156px,#13c3f7 208px,#13c3f7 260px,#13c2f6 312px,#12c1f6 364px,#12c0f5 416px,#12bef4 468px,#12baf2 520px,#12b6f0 572px,#11b0ed 624px,#10aaea 676px,#0fa2e6 728px,#0e9ae2 780px,#0d92de 832px,#0c8ada 884px,#0b83d7 936px,#0a7dd5 988px,#0a78d3 1040px,#0a73d1 1092px,#0a6ecf 1144px,#0a68cd 1196px,#0a62c9 1248px,#0a5cc6 1300px,#0a55c3 1352px,#0a4ebf 1404px,#0a48ba 1456px,#0a43b6 1508px,#0a3fb2 1560px,#0a3fb2 1562px)"></div>
<div class="a" style="left:0;top:774px;width:1562px;height:5px;background:linear-gradient(90deg,#12c4f7 0px,#13c3f7 52px,#13c3f7 104px,#13c3f7 156px,#13c3f7 208px,#13c3f7 260px,#13c2f6 312px,#12c1f6 364px,#12c0f5 416px,#12bef4 468px,#12bbf2 520px,#12b7f0 572px,#11b1ed 624px,#10aaea 676px,#0fa2e6 728px,#0e9ae2 780px,#0d92de 832px,#0c8ada 884px,#0b83d7 936px,#0b7dd5 988px,#0a78d3 1040px,#0a73d1 1092px,#0a6ecf 1144px,#0a68cc 1196px,#0a62c9 1248px,#0a5cc6 1300px,#0a55c2 1352px,#0a4ebe 1404px,#0a49ba 1456px,#0a44b6 1508px,#0a3fb3 1560px,#0a3fb2 1562px)"></div>
<div class="a" style="left:0;top:779px;width:600px;height:18px;background:linear-gradient(90deg,#12c4f7 0px,#12c3f7 52px,#12c3f7 104px,#13c3f7 156px,#13c3f7 208px,#13c3f7 260px,#12c2f6 312px,#12c2f6 364px,#12c0f5 416px,#12bef4 468px,#12bbf2 520px,#12b7f0 572px,#11b4ef 600px)"></div>
<div class="a" style="left:600px;top:779px;width:962px;height:18px;background:linear-gradient(90deg,#0fa0e7 0px,#0e9ee5 24px,#0d9ae3 76px,#0c96e1 128px,#0b92e0 180px,#0b8dde 232px,#0b88dc 284px,#0b83d9 336px,#0b7dd5 388px,#0a78d2 440px,#0a72cf 492px,#0a6ccd 544px,#0a67cb 596px,#0a61c8 648px,#0a5bc6 700px,#0a56c3 752px,#0a50c0 804px,#0a4bbd 856px,#0a46ba 908px,#0a41b7 960px,#0a40b6 962px)"></div>
<div class="a" style="left:0;top:797px;width:600px;height:18px;background:linear-gradient(90deg,#12c4f7 0px,#12c3f7 52px,#12c3f6 104px,#12c3f7 156px,#12c3f7 208px,#12c3f6 260px,#12c3f6 312px,#12c2f6 364px,#12c1f5 416px,#12bff4 468px,#12bcf2 520px,#12b8f0 572px,#12b5ef 600px)"></div>
<div class="a" style="left:600px;top:797px;width:962px;height:18px;background:linear-gradient(90deg,#0fa0e6 0px,#0e9ee5 24px,#0d9ae2 76px,#0c96e0 128px,#0b92df 180px,#0b8dde 232px,#0b88db 284px,#0b83d9 336px,#0b7dd5 388px,#0a78d2 440px,#0a72cf 492px,#0a6ccd 544px,#0a67cb 596px,#0a61c8 648px,#0a5bc6 700px,#0a55c3 752px,#0a50c0 804px,#0a4bbd 856px,#0a46b9 908px,#0a41b6 960px,#0a40b6 962px)"></div>
<div class="a" style="left:0;top:815px;width:600px;height:18px;background:linear-gradient(90deg,#12c4f7 0px,#12c3f6 52px,#12c3f6 104px,#12c3f6 156px,#12c3f6 208px,#12c3f6 260px,#12c3f6 312px,#12c2f6 364px,#12c1f5 416px,#12bff4 468px,#12bcf2 520px,#12b8f0 572px,#12b6ef 600px)"></div>
<div class="a" style="left:600px;top:815px;width:962px;height:18px;background:linear-gradient(90deg,#0fa0e6 0px,#0e9ee5 24px,#0d9ae2 76px,#0c96e0 128px,#0b92df 180px,#0b8ddd 232px,#0b88db 284px,#0b83d9 336px,#0b7dd5 388px,#0a78d2 440px,#0a72cf 492px,#0a6ccd 544px,#0a67cb 596px,#0a61c9 648px,#0a5bc6 700px,#0a55c3 752px,#0a50c0 804px,#0a4bbc 856px,#0a46b9 908px,#0a41b6 960px,#0a40b6 962px)"></div>
<div class="a" style="left:0;top:833px;width:600px;height:18px;background:linear-gradient(90deg,#12c4f7 0px,#12c3f6 52px,#12c3f6 104px,#12c3f6 156px,#12c3f6 208px,#12c3f6 260px,#12c3f6 312px,#12c2f6 364px,#12c1f5 416px,#12bff4 468px,#12bdf3 520px,#12b9f1 572px,#12b6ef 600px)"></div>
<div class="a" style="left:600px;top:833px;width:962px;height:18px;background:linear-gradient(90deg,#0fa0e5 0px,#0e9ee4 24px,#0c9ae1 76px,#0b96df 128px,#0b92de 180px,#0b8ddd 232px,#0b88db 284px,#0b83d9 336px,#0b7dd5 388px,#0a78d2 440px,#0a72cf 492px,#0a6ccd 544px,#0a67cb 596px,#0a61c9 648px,#0a5bc6 700px,#0a55c3 752px,#0a50bf 804px,#0a4bbc 856px,#0a46b9 908px,#0a40b6 960px,#0a40b6 962px)"></div>
<div class="a" style="left:0;top:851px;width:600px;height:18px;background:linear-gradient(90deg,#12c4f7 0px,#12c3f6 52px,#12c3f6 104px,#12c3f6 156px,#12c3f6 208px,#12c3f6 260px,#12c3f6 312px,#12c3f6 364px,#12c1f5 416px,#12c0f4 468px,#12bdf2 520px,#12b9f0 572px,#12b6ef 600px)"></div>
<div class="a" style="left:600px;top:851px;width:962px;height:18px;background:linear-gradient(90deg,#0ea0e5 0px,#0e9ee4 24px,#0c9ae1 76px,#0b96df 128px,#0b92de 180px,#0b8ddd 232px,#0b88db 284px,#0b83d8 336px,#0b7dd5 388px,#0a78d2 440px,#0a72d0 492px,#0a6ccd 544px,#0a67cb 596px,#0a61c9 648px,#0a5bc6 700px,#0a55c2 752px,#0a50bf 804px,#0a4bbc 856px,#0a46b9 908px,#0a40b6 960px,#0a40b6 962px)"></div>
<div class="a" style="left:0;top:869px;width:600px;height:18px;background:linear-gradient(90deg,#12c4f6 0px,#12c4f6 52px,#12c3f6 104px,#12c3f6 156px,#12c3f6 208px,#12c3f6 260px,#12c3f6 312px,#12c3f5 364px,#12c2f5 416px,#12c0f4 468px,#12bdf2 520px,#12b9f0 572px,#12b6ef 600px)"></div>
<div class="a" style="left:600px;top:869px;width:962px;height:18px;background:linear-gradient(90deg,#0ea0e4 0px,#0e9ee3 24px,#0c9be0 76px,#0b96de 128px,#0b92dd 180px,#0b8ddc 232px,#0b88db 284px,#0b83d8 336px,#0b7dd5 388px,#0a78d2 440px,#0a72d0 492px,#0a6cce 544px,#0a67cb 596px,#0a61c9 648px,#0a5bc6 700px,#0a55c2 752px,#0a50bf 804px,#0a4bbc 856px,#0a45b9 908px,#0a40b6 960px,#0a40b6 962px)"></div>
<div class="a" style="left:0;top:887px;width:600px;height:18px;background:linear-gradient(90deg,#12c5f6 0px,#12c4f6 52px,#12c3f6 104px,#12c3f6 156px,#12c4f6 208px,#12c4f6 260px,#12c3f6 312px,#12c3f5 364px,#12c2f5 416px,#12c0f4 468px,#12bdf2 520px,#12b9f0 572px,#12b6ef 600px)"></div>
<div class="a" style="left:600px;top:887px;width:962px;height:18px;background:linear-gradient(90deg,#0ea0e4 0px,#0e9ee3 24px,#0c9be0 76px,#0b96de 128px,#0b92dd 180px,#0b8ddc 232px,#0b88da 284px,#0b83d8 336px,#0b7dd5 388px,#0b78d2 440px,#0a72d0 492px,#0a6cce 544px,#0a66cb 596px,#0a60c9 648px,#0a5bc5 700px,#0a55c2 752px,#0a50bf 804px,#0a4bbc 856px,#0a45b9 908px,#0a40b6 960px,#0a40b6 962px)"></div>
<div class="a" style="left:0;top:905px;width:600px;height:18px;background:linear-gradient(90deg,#12c5f6 0px,#12c4f6 52px,#12c4f6 104px,#12c4f6 156px,#12c4f6 208px,#12c4f6 260px,#12c3f6 312px,#12c3f5 364px,#12c2f5 416px,#12c0f4 468px,#12bdf2 520px,#12b9f0 572px,#12b6ef 600px)"></div>
<div class="a" style="left:600px;top:905px;width:962px;height:18px;background:linear-gradient(90deg,#0ea0e4 0px,#0d9ee2 24px,#0c9be0 76px,#0b96de 128px,#0b92dd 180px,#0b8ddb 232px,#0b88da 284px,#0b83d8 336px,#0b7dd5 388px,#0b78d2 440px,#0a72d0 492px,#0a6cce 544px,#0a66cb 596px,#0a60c8 648px,#0a5bc5 700px,#0a55c2 752px,#0a50bf 804px,#0a4abc 856px,#0a45b9 908px,#0a40b6 960px,#0a40b6 962px)"></div>
<div class="a" style="left:0;top:923px;width:600px;height:13px;background:linear-gradient(90deg,#12c5f6 0px,#12c4f6 52px,#12c4f6 104px,#12c4f6 156px,#12c4f6 208px,#12c4f6 260px,#12c3f5 312px,#12c3f5 364px,#12c2f4 416px,#12c0f3 468px,#12bdf2 520px,#12b9f0 572px,#12b6ee 600px)"></div>
<div class="a" style="left:600px;top:923px;width:962px;height:13px;background:linear-gradient(90deg,#0ea0e3 0px,#0d9ee2 24px,#0c9adf 76px,#0b96de 128px,#0b92dc 180px,#0b8ddb 232px,#0b88da 284px,#0b83d8 336px,#0b7dd5 388px,#0b78d2 440px,#0a72d0 492px,#0a6cce 544px,#0a66cb 596px,#0a60c8 648px,#0a5ac5 700px,#0a55c2 752px,#0a50bf 804px,#0a4abc 856px,#0a45b9 908px,#0a40b6 960px,#0a40b5 962px)"></div>
 <svg class="a" style="left:0;top:0" width="1562" height="936" viewBox="0 0 1562 936">
  <defs><filter id="bl4" x="-20%" y="-20%" width="140%" height="140%"><feGaussianBlur stdDeviation="4"/></filter></defs>
  <path d="M85 20 C250 50 450 100 640 150 L1000 230" stroke="#9fe6ff" stroke-width="8" opacity="0.13" fill="none" filter="url(#bl4)"/>
  <rect x="600" y="779" width="1" height="157" fill="#0a7ad0" opacity="0.6"/>
  <!-- windows logo panes (visible part) -->
  <defs>
   <radialGradient id="glow" cx="1258" cy="470" r="1" gradientUnits="userSpaceOnUse" gradientTransform="translate(1258 470) scale(55 230) translate(-1258 -470)">
    <stop offset="0" stop-color="#1a8cff" stop-opacity="0.5"/>
    <stop offset="0.5" stop-color="#1a8cff" stop-opacity="0.28"/>
    <stop offset="1" stop-color="#1a8cff" stop-opacity="0"/>
   </radialGradient>
   <linearGradient id="p1" x1="0" y1="0" x2="0" y2="1"><stop offset="0" stop-color="#36b6f4"/><stop offset="1" stop-color="#2ca4ee"/></linearGradient>
   <linearGradient id="p2" x1="0" y1="0" x2="0" y2="1"><stop offset="0" stop-color="#2ea2ea"/><stop offset="1" stop-color="#2898e4"/></linearGradient>
  </defs>
  <rect x="1100" y="200" width="330" height="600" fill="url(#glow)"/>
  <polygon points="1190,353 1253,344 1253,484.5 1190,484.5" fill="url(#p1)"/>
  <polygon points="1190,491 1253,491 1253,633 1190,624" fill="url(#p2)"/>
  <polygon points="1190,560 1253,551 1253,553 1190,562.5" fill="#5cc8f8" opacity="0.6"/><polygon points="1190,562.5 1253,553 1253,633 1190,624" fill="#2a90e0" opacity="0.25"/>
  <line x1="1253" y1="344" x2="1253" y2="484" stroke="#6fe6ff" stroke-width="2"/>
  <line x1="1253" y1="491" x2="1253" y2="633" stroke="#6fe6ff" stroke-width="2"/>
  <line x1="1190" y1="353" x2="1253" y2="344" stroke="#6fe0ff" stroke-width="1.2"/>
  <line x1="1190" y1="624" x2="1253" y2="633" stroke="#6fe0ff" stroke-width="1.2"/>
 </svg>
</div>

<!-- TOP TOOLBAR -->
<div class="a" style="left:529px;top:3px;width:859px;height:1px;background:#5a5a5a"></div>
<div class="a" style="left:529px;top:46px;width:859px;height:1px;background:#7a7a7a"></div>
<div class="a" style="left:529px;top:47px;width:859px;height:1px;background:#f0f0f0"></div>
<div class="a" style="left:529px;top:4px;width:61px;height:42px;background:linear-gradient(#e9e9e9,#c4c4c4 45%,#a3a3a3)"></div>
<div class="a" style="left:590px;top:4px;width:2px;height:42px;background:#fafafa"></div>
<div class="a" id="tbar" style="left:592px;top:4px;width:690px;height:42px;background:linear-gradient(#fbfbfb,#f6f6f6 50%,#eeeeee 52%,#f3f3f3 100%)"></div>
<div class="a" style="left:715px;top:4px;width:1px;height:42px;background:#777"></div>
<div class="a" style="left:815px;top:4px;width:1px;height:42px;background:#777"></div>
<div class="a" style="left:1002px;top:4px;width:1px;height:42px;background:#777"></div>
<div class="a" style="left:1155px;top:4px;width:1px;height:42px;background:#777"></div>
<div class="a" style="left:1282px;top:4px;width:106px;height:42px;background:linear-gradient(#d2d2d2,#b4b4b4 50%,#9c9c9c)"></div>
<div class="a" style="left:1316px;top:4px;width:1px;height:42px;background:#e6e6e6"></div>
<div class="a" style="left:1351px;top:4px;width:1px;height:42px;background:#e6e6e6"></div>
<div class="a" style="left:1387px;top:3px;width:1px;height:44px;background:#6a6a6a"></div>
<!-- logo -->
<svg class="a" style="left:545px;top:8px" width="30" height="32" viewBox="0 0 30 32"><use href="#zlogo"/></svg>
<!-- session icon -->
<svg class="a" style="left:606px;top:17px" width="22" height="18" viewBox="0 0 22 18"><rect x="1.2" y="1.2" width="19.6" height="12" rx="1.5" fill="none" stroke="#444" stroke-width="2"/><rect x="5" y="16" width="12" height="2" fill="#444"/><path d="M10 4 L10 11 L11.8 9.4 L13 12 L14 11.5 L12.9 9 L15 9 Z" fill="#444"/></svg>
<div class="a t" style="left:642px;top:20px;font-size:14px;font-weight:bold;color:#363636;letter-spacing:-0.6px">Session</div>
<svg class="a" style="left:699px;top:25px" width="10" height="6" viewBox="0 0 10 6"><path d="M0.5 0.5 L9.5 0.5 L5 5.5 Z" fill="#111"/></svg>
<!-- chat icon -->
<svg class="a" style="left:730px;top:17px" width="30" height="20" viewBox="0 0 30 20"><path d="M15 2 C7.5 2 2.5 5 2.5 9 C2.5 12 5.5 14.2 9.5 15 L8 19 L14 15.6 C21.5 15.8 27.5 12.8 27.5 9 C27.5 5 22.5 2 15 2 Z" fill="none" stroke="#444" stroke-width="2"/></svg>
<div class="a t" style="left:772px;top:20px;font-size:14px;font-weight:bold;color:#363636;letter-spacing:-0.6px">Chat</div>
<!-- files icon -->
<svg class="a" style="left:833px;top:16px" width="24" height="20" viewBox="0 0 24 20"><path d="M9 1 L22.5 1 L22.5 19 L9 19" fill="none" stroke="#444" stroke-width="2"/><path d="M1 5 L15 5 M4 9 L16 9 M6 13 L17 13 M8 17 L16 17" stroke="#444" stroke-width="1.8"/></svg>
<div class="a t" style="left:879px;top:20px;font-size:14px;font-weight:bold;color:#363636;letter-spacing:-0.6px">Files &amp; Folders</div>
<!-- screenshot icon -->
<svg class="a" style="left:1021px;top:16px" width="22" height="20" viewBox="0 0 22 20"><path d="M1 6 V1 H6 M9 1 H13 M16 1 H19 V4 M1 9 V13 M1 16 V19 H4" fill="none" stroke="#444" stroke-width="1.8"/><rect x="7" y="8" width="14" height="11" rx="1.5" fill="none" stroke="#444" stroke-width="1.8"/><circle cx="14" cy="13.5" r="2.6" fill="none" stroke="#444" stroke-width="1.6"/><rect x="9" y="6" width="3" height="2" fill="#444"/></svg>
<div class="a t" style="left:1059px;top:20px;font-size:14px;font-weight:bold;color:#363636;letter-spacing:-0.6px">Screenshot</div>
<!-- gear -->
<svg class="a" style="left:1170px;top:15px" width="22" height="22" viewBox="0 0 22 22"><g fill="#444"><circle cx="11" cy="11" r="7.2"/><rect x="9" y="0.5" width="4" height="5"/><rect x="9" y="16.5" width="4" height="5"/><rect x="0.5" y="9" width="5" height="4"/><rect x="16.5" y="9" width="5" height="4"/><rect x="9" y="0.5" width="4" height="5" transform="rotate(45 11 11)"/><rect x="9" y="16.5" width="4" height="5" transform="rotate(45 11 11)"/><rect x="0.5" y="9" width="5" height="4" transform="rotate(45 11 11)"/><rect x="16.5" y="9" width="5" height="4" transform="rotate(45 11 11)"/></g><circle cx="11" cy="11" r="3.2" fill="#f4f4f4"/></svg>
<div class="a t" style="left:1204px;top:20px;font-size:14px;font-weight:bold;color:#363636;letter-spacing:-0.6px">Settings</div>
<svg class="a" style="left:1266px;top:25px" width="10" height="6" viewBox="0 0 10 6"><path d="M0.5 0.5 L9.5 0.5 L5 5.5 Z" fill="#111"/></svg>
<!-- window controls -->
<div class="a" style="left:1293px;top:24px;width:12px;height:3px;background:#fff"></div>
<div class="a" style="left:1328px;top:20px;width:12px;height:10px;border:2px solid #fff;border-top-width:3px"></div>
<svg class="a" style="left:1363px;top:20px" width="12" height="11" viewBox="0 0 12 11"><path d="M1.5 1 L10.5 10 M10.5 1 L1.5 10" stroke="#fff" stroke-width="2.4"/></svg>

<!-- DIALOG -->
<div class="a" style="left:535px;top:192px;width:847px;height:639px;background:#fff;border:1px solid #233c4c"></div>
<svg class="a" style="left:544.3px;top:199px" width="21" height="22.4" viewBox="0 0 30 32"><use href="#zlogo"/></svg>
<div class="a t" style="left:570px;top:204px;font-size:15px;color:#1a1a1a">File Transfer - 123456789</div>
<div class="a" style="left:1228px;top:210px;width:12px;height:1px;background:#111"></div>
<div class="a" style="left:1286px;top:205px;width:12px;height:12px;border:1px solid #111"></div>
<svg class="a" style="left:1344px;top:204px" width="14" height="14" viewBox="0 0 14 14"><path d="M1 1 L13 13 M13 1 L1 13" stroke="#111" stroke-width="1.1"/></svg>
<!-- group boxes -->
<div class="a" style="left:547px;top:248px;width:414px;height:415px;border:1px solid #dcdcdc;border-bottom:none"></div>
<div class="a" style="left:961px;top:248px;width:414px;height:415px;border:1px solid #dcdcdc;border-bottom:none"></div>
<div class="a" style="left:547px;top:662px;width:828px;height:161px;border:1px solid #dcdcdc"></div>
<div class="a t" style="left:552px;top:241px;padding:0 4px;background:#fff;font-size:13px;color:#1a1a1a">JEFF - 14772</div>
<div class="a t" style="left:967px;top:241px;padding:0 4px;background:#fff;font-size:13px;color:#1a1a1a">JONATHAN - 15047</div>
<!-- nav icons left -->
<svg class="a" style="left:552px;top:266px" width="100" height="30" viewBox="552 266 100 30"><g fill="none" stroke="#4a4a4a" stroke-width="1.4"><path d="M560.1 289.5 V280.4 H557.2 L566.6 270.3 L576.5 279.5 H573.5 V289.5 Z"/><path d="M608.8 281.2 A8.3 8.3 0 1 1 600.5 273.4"/><path d="M594.8 269.8 L600.5 273.4 L596.5 278.8"/><path d="M633.6 270.3 L624 280.2 L633.6 289.5 M624 280.2 H644"/></g></svg>
<svg class="a" style="left:965px;top:266px" width="100" height="30" viewBox="552 266 100 30"><g fill="none" stroke="#4a4a4a" stroke-width="1.4"><path d="M560.1 289.5 V280.4 H557.2 L566.6 270.3 L576.5 279.5 H573.5 V289.5 Z"/><path d="M608.8 281.2 A8.3 8.3 0 1 1 600.5 273.4"/><path d="M594.8 269.8 L600.5 273.4 L596.5 278.8"/><path d="M633.6 270.3 L624 280.2 L633.6 289.5 M624 280.2 H644"/></g></svg>
<!-- path boxes -->
<div class="a" style="left:654px;top:267px;width:300px;height:30px;border:1px solid #7a7a7a;background:#fff"></div>
<div class="a t" style="left:660px;top:276px;font-size:13px;color:#111;letter-spacing:0.45px">C:\Users\jeff-14772\Documents\Sales\</div>
<div class="a" style="left:1067px;top:267px;width:300px;height:30px;border:1px solid #7a7a7a;background:#fff"></div>
<div class="a t" style="left:1073px;top:276px;font-size:13px;color:#111;letter-spacing:0.45px">C:\Users\jonathan-15047\Documents\</div>
<!-- buttons -->
<div class="a" style="left:874px;top:302px;width:81px;height:28px;background:#1677c8"></div>
<div class="a t" style="left:889px;top:309px;font-size:13px;color:#fff">Send &gt;&gt;</div>
<div class="a" style="left:968px;top:302px;width:80px;height:27px;background:#efefef;border:1px solid #808080;box-shadow:inset 0 0 0 1px #fff"></div>
<div class="a t" style="left:975px;top:309px;font-size:13px;color:#555">&lt;&lt; Recieve</div>
<!-- lists -->
<div class="a" style="left:552px;top:334px;width:401px;height:322px;border:1px solid #7e7e7e;background:#fff"></div>
<div class="a" style="left:967px;top:334px;width:401px;height:322px;border:1px solid #7e7e7e;background:#fff"></div>
<div id="lhdr" class="a" style="left:0;top:0">
 <div class="a" style="left:726px;top:336px;width:1px;height:22px;background:#e6e6e6"></div>
 <div class="a" style="left:796px;top:336px;width:1px;height:22px;background:#e6e6e6"></div>
 <div class="a" style="left:866px;top:336px;width:1px;height:22px;background:#e6e6e6"></div>
 <div class="a" style="left:926px;top:336px;width:1px;height:22px;background:#e6e6e6"></div>
 <div class="a" style="left:1141px;top:336px;width:1px;height:22px;background:#e6e6e6"></div>
 <div class="a" style="left:1211px;top:336px;width:1px;height:22px;background:#e6e6e6"></div>
 <div class="a" style="left:1281px;top:336px;width:1px;height:22px;background:#e6e6e6"></div>
 <div class="a" style="left:1341px;top:336px;width:1px;height:22px;background:#e6e6e6"></div>
</div>
<div class="a" style="left:578px;top:360px;width:349px;height:21px;background:#0078d7;outline:1px dotted #c88a3a;outline-offset:-1px"></div>
<div id="ltxt" style="font-size:12px;color:#111;letter-spacing:0.3px">
 <div class="a t" style="left:560px;top:343px">Name</div>
 <div class="a t" style="left:733px;top:343px">Type</div>
 <div class="a t" style="left:820px;top:343px">Size</div>
 <div class="a t" style="left:876px;top:343px">Date ...</div>
 <div class="a t" style="left:580px;top:365px;color:#fff">report</div>
 <div class="a t" style="left:733px;top:365px;color:#fff">File folder</div>
 <div class="a t" style="left:874px;top:365px;color:#fff">12-12...</div>
 <div class="a t" style="left:580px;top:386px">monthly meet.PNG</div>
 <div class="a t" style="left:580px;top:407px">service queue.PNG</div>
 <div class="a t" style="left:580px;top:428px">session count.PNG</div>
 <div class="a t" style="left:580px;top:449px">session duration.PNG</div>
 <div class="a t" style="left:580px;top:470px">session.PNG</div>
 <div class="a t" style="left:580px;top:491px">tech by session.PNG</div>
 <div class="a t" style="left:733px;top:386px">PNG File</div>
 <div class="a t" style="left:733px;top:407px">PNG File</div>
 <div class="a t" style="left:733px;top:428px">PNG File</div>
 <div class="a t" style="left:733px;top:449px">PNG File</div>
 <div class="a t" style="left:733px;top:470px">PNG File</div>
 <div class="a t" style="left:733px;top:491px">PNG File</div>
 <div class="a t" style="left:807px;top:386px">97.61 KB</div>
 <div class="a t" style="left:807px;top:407px">76.53 KB</div>
 <div class="a t" style="left:803px;top:428px">107.21 KB</div>
 <div class="a t" style="left:803px;top:449px">107.05 KB</div>
 <div class="a t" style="left:807px;top:470px">97.36 KB</div>
 <div class="a t" style="left:807px;top:491px">98.88 KB</div>
 <div class="a t" style="left:874px;top:386px">21-09...</div>
 <div class="a t" style="left:874px;top:407px">21-09...</div>
 <div class="a t" style="left:874px;top:428px">21-09...</div>
 <div class="a t" style="left:874px;top:449px">21-09...</div>
 <div class="a t" style="left:874px;top:470px">21-09...</div>
 <div class="a t" style="left:874px;top:491px">21-09...</div>
 <div class="a t" style="left:975px;top:343px">Name</div>
 <div class="a t" style="left:1148px;top:343px">Type</div>
 <div class="a t" style="left:1235px;top:343px">Size</div>
 <div class="a t" style="left:1291px;top:343px">Date ...</div>
 <div class="a t" style="left:995px;top:365px">Marketing</div>
 <div class="a t" style="left:1148px;top:365px">FileFolder</div>
 <div class="a t" style="left:1289px;top:365px">12-12...</div>
</div>
<!-- file icons -->
<svg width="0" height="0" style="position:absolute"><defs>
 <symbol id="png" viewBox="0 0 15 16"><path d="M1.5 0.5 H10 L14 4.5 V15.5 H1.5 Z" fill="#fff" stroke="#8a8a8a"/><path d="M10 0.5 V4.5 H14" fill="none" stroke="#8a8a8a"/><rect x="4" y="6" width="7" height="7" fill="#1d62c4"/><path d="M4 13 L7 9.5 L11 13 Z" fill="#0a2a66"/></symbol>
</defs></svg>
<svg class="a" style="left:561px;top:362px" width="13" height="17" viewBox="0 0 13 17"><path d="M1 1 H8 L12 4 V16 L3 16 L1 14 Z" fill="#7a9aa6"/><path d="M1 1 H5 V16 H1 Z" fill="#5d7f8c"/></svg>
<svg class="a" style="left:561px;top:383px" width="15" height="16"><use href="#png"/></svg>
<svg class="a" style="left:561px;top:404px" width="15" height="16"><use href="#png"/></svg>
<svg class="a" style="left:561px;top:425px" width="15" height="16"><use href="#png"/></svg>
<svg class="a" style="left:561px;top:446px" width="15" height="16"><use href="#png"/></svg>
<svg class="a" style="left:561px;top:467px" width="15" height="16"><use href="#png"/></svg>
<svg class="a" style="left:561px;top:488px" width="15" height="16"><use href="#png"/></svg>
<svg class="a" style="left:975px;top:362px" width="14" height="17" viewBox="0 0 14 17"><path d="M1 1 H9 L13 3 V16 H3 L1 14 Z" fill="#f3c95a"/><path d="M1 1 H5 V16 H1 Z" fill="#e0a935"/></svg>
<!-- drop text -->
<div class="a" style="left:548px;top:710px;width:806px;text-align:center;font-size:18px;font-weight:bold;color:#dcdcdc;line-height:22px;transform:scaleX(1.085)">Drag and drop your files or<br>folders to transfer</div>

<!-- ZOHO PANEL -->
<div class="a" style="left:1427px;top:882px;width:40px;height:34px;background:#fff;border-radius:17px 0 0 17px;box-shadow:0 0 2px rgba(0,0,0,0.25)"></div>
<svg class="a" style="left:1439px;top:894px" width="10" height="12" viewBox="0 0 10 12"><path d="M3 1.5 L7.2 6 L3 10.5" fill="none" stroke="#222" stroke-width="1.6"/></svg>
<div class="a" style="left:1456px;top:852px;width:283px;height:129px;border-radius:6px;overflow:hidden;background:#f3f3f3;box-shadow:0 0 2px rgba(0,0,0,0.3)">
 <div class="a" style="left:0;top:30px;width:283px;height:35px;background:#30363d"></div>
 <div class="a" style="left:0;top:65px;width:283px;height:32px;background:#fff"></div>
 <div class="a" style="left:0;top:97px;width:283px;height:3px;background:linear-gradient(#d4d4d4,#ececec)"></div>
 <div class="a" style="left:0;top:100px;width:283px;height:29px;background:#f3f3f3"></div>
</div>
<svg class="a" style="left:1459.7px;top:853.7px" width="22.5" height="24" viewBox="0 0 30 32"><use href="#zlogo"/></svg>
<div class="a t" style="left:1487px;top:860px;font-size:14.5px;color:#1a1a1a">Zoho Assist</div>
<svg class="a" style="left:1716px;top:861px" width="12" height="12" viewBox="0 0 12 12"><path d="M1.5 1.5 L10.5 10.5 M10.5 1.5 L1.5 10.5" stroke="#111" stroke-width="2"/></svg>
<svg class="a" style="left:1462px;top:888px" width="130" height="24" viewBox="1462 888 130 24"><g fill="none" stroke="#fff" stroke-width="1.5"><circle cx="1474" cy="895.5" r="4.6"/><path d="M1464.8 909.5 C1465.5 903.5 1469 901 1474 901 C1479 901 1482.5 903.5 1483.3 909.5"/><path d="M1500.5 892 H1518.5 V904 H1506 L1501 908.5 V892 Z"/><path d="M1504.5 896.5 H1514.5 M1504.5 899.8 H1510.5"/><path d="M1540.3 906.8 L1541.4 902.4 L1551.4 892.4 L1554.6 895.6 L1544.6 905.6 Z"/><path d="M1549.5 894.3 L1552.7 897.5"/><path d="M1534.6 896 C1537 895 1538 897 1537.5 900 C1537 903 1535.5 906 1537 907.5 C1538.5 909 1540 907.5 1540.8 906"/><path d="M1573.2 904.4 V891.2 H1583.5"/><path d="M1575.8 893.7 H1587.7 V907.9 H1575.8 Z"/><path d="M1579.5 898.5 H1585 M1579.5 901.2 H1585 M1581 903.9 H1585"/></g></svg>
<div class="a" style="left:1716px;top:899px;width:3px;height:3px;background:#fff;border-radius:2px"></div>
<div class="a" style="left:1720px;top:899px;width:3px;height:3px;background:#fff;border-radius:2px"></div>
<div class="a" style="left:1724px;top:899px;width:3px;height:3px;background:#fff;border-radius:2px"></div>
<svg class="a" style="left:1467px;top:930px" width="14" height="10" viewBox="0 0 14 10"><path d="M2 2.5 L7 7.5 L12 2.5" fill="none" stroke="#333" stroke-width="1.6"/></svg>
<div class="a t" style="left:1489px;top:929px;font-size:12.5px;font-weight:bold;color:#111">File Transfer</div>
<div class="a" style="left:1641px;top:921px;width:97px;height:26px;background:#eef6fa;border:1px solid #9a9a9a"></div>
<svg class="a" style="left:1647px;top:925px" width="16" height="19" viewBox="0 0 16 19"><path d="M5 1.5 H13.5 V16 M3 5 V17.5 H6.5" fill="none" stroke="#222" stroke-width="1.2"/><path d="M5 1.5 L3 4 V5" fill="none" stroke="#222" stroke-width="1.2"/><path d="M11 18 V12.5 M9 14 L11 12 L13 14" fill="none" stroke="#222" stroke-width="1.1"/></svg>
<div class="a t" style="left:1671px;top:929px;font-size:12.5px;color:#222">Send Files</div>
<div class="a" style="left:1467px;top:960px;width:13px;height:13px;border-radius:50%;background:#1fb34e"></div>
<div class="a t" style="left:1491px;top:959px;font-size:12.5px;color:#333">jonathan</div>
<svg class="a" style="left:1690px;top:960px" width="18" height="15" viewBox="0 0 18 15"><rect x="1.5" y="1.5" width="14.5" height="10" fill="none" stroke="#333" stroke-width="1.2"/><rect x="5" y="13.5" width="8" height="1.2" fill="#666"/></svg>
<div class="a" style="left:1717px;top:962px;width:3px;height:12px;background:#111"></div>
<div class="a" style="left:1723px;top:962px;width:3px;height:12px;background:#111"></div>

<!-- DESKTOP ICONS -->
<div style="font-size:12px;color:#fff;text-shadow:0 0 1px #000,1px 1px 1px #000,0 0 2px #000">
 <div class="a t" style="left:178px;top:95.5px;width:76px;text-align:center">This PC</div>
 <div class="a t" style="left:177px;top:178.5px;width:76px;text-align:center">Network</div>
 <div class="a t" style="left:177px;top:261.5px;width:76px;text-align:center">Recycle Bin</div>
 <div class="a t" style="left:177px;top:344.5px;width:76px;text-align:center">Control Panel</div>
 <div class="a t" style="left:177px;top:427.5px;width:76px;text-align:center">New folder</div>
</div>
<svg class="a" style="left:195px;top:55px" width="40" height="36" viewBox="195 55 40 36"><path d="M208.6 60.5 L229 66.7 L229 79.6 L208.6 73.8 Z" fill="#62c6f2" stroke="#2b4f72" stroke-width="1.1"/><path d="M210.2 62.5 L227.3 67.8 L227.3 77.6 L210.2 72.4 Z" fill="#8ad8f8"/><path d="M214 78.5 L224 81 L220 83 L211 80.5 Z" fill="#e6eef4"/><path d="M200.5 81.2 L212.5 79.6 L222.5 84.6 L210 87.2 Z" fill="#eef2f4" stroke="#5a7890" stroke-width="0.6"/></svg>
<svg class="a" style="left:195px;top:137px" width="40" height="36" viewBox="195 137 40 36"><circle cx="219" cy="152.2" r="9.8" fill="#6aaed6"/><path d="M210 148 C212 141 220 139 226 143 C222 143 216 146 210 148 Z" fill="#e8f6fc"/><path d="M228.5 150 A9.8 9.8 0 0 1 221 161.8 L222 152 Z" fill="#3d6e96"/><path d="M201.5 149.6 L220.6 155.2 L220.6 167.5 L201.5 161.6 Z" fill="#5ec6f2" stroke="#2e5a80" stroke-width="1"/><path d="M203 151.5 L219 156.2 L219 165.5 L203 160.6 Z" fill="#86d6f8"/><path d="M206 166 L216 168.5 L213 171 L204 168.5 Z" fill="#e8eef2"/></svg>
<svg class="a" style="left:195px;top:220px" width="40" height="36" viewBox="195 220 40 36"><path d="M203 227 L213 224.5 L227 228.5 L217 232 Z" fill="#f4f6f8"/><path d="M203 227 L217 232 L217 252.5 L205 249 Z" fill="#eceff1"/><path d="M217 232 L227 228.5 L225.5 248.5 L217 252.5 Z" fill="#d8dde0"/><path d="M208.5 238 L212 236.5 M214.5 240 L213 244.5 M210.5 245 L207.5 241.5" stroke="#1f6fd0" stroke-width="2.6" stroke-linecap="round"/></svg>
<svg class="a" style="left:196px;top:306px" width="40" height="30" viewBox="196 306 40 30"><rect x="201" y="312.6" width="28.6" height="18.4" fill="#a6def8" stroke="#1c6cac" stroke-width="1.2"/><circle cx="210.2" cy="319.8" r="4.4" fill="#2a7cc4" stroke="#e8f8ff" stroke-width="1"/><path d="M210.2 319.8 L210.2 315.4 A4.4 4.4 0 0 1 214.5 318.8 Z" fill="#f4b030"/><rect x="219.4" y="314.6" width="8" height="10.5" rx="1.2" fill="#d8f0fc" stroke="#3a86c8" stroke-width="0.9"/><path d="M221 317.5 H226 M221 320 H226 M221 322.5 H226" stroke="#5a9ad8" stroke-width="0.9"/><rect x="216" y="327" width="10" height="1.6" fill="#3a78c8"/><rect x="204" y="327.5" width="10" height="1.2" fill="#d8a060"/></svg>
<svg class="a" style="left:196px;top:388px" width="40" height="36" viewBox="196 388 40 36"><path d="M204 392.5 H220.5 V396 L211 418.5 L204 417 Z" fill="#f4cc7c"/><path d="M209.8 393.5 L225 396 V420 L209.8 418 Z" fill="#f6f8fa"/><path d="M219.5 401.5 C222 404 224 407 224.5 410 C224 413 222 415.5 219.5 417" fill="none" stroke="#2e9e4a" stroke-width="1.2"/><path d="M216.5 393 L218 395" stroke="#2e9e4a" stroke-width="1.5"/><rect x="211" y="408" width="4" height="1.5" fill="#4a6ab0"/></svg>

<!-- REMOTE TASKBAR -->
<div class="a" style="left:177px;top:987px;width:1562px;height:40px;background:linear-gradient(90deg,#243740 0,#233640 400px,#22343f 830px,#1e2b3c 1230px,#1c2a3e 1562px)"></div>
<svg class="a" style="left:192px;top:997px" width="20" height="20" viewBox="0 0 20 20"><path d="M1 3.2 L8.3 2.2 V9.3 H1 Z M9.3 2 L18.5 0.8 V9.3 H9.3 Z M1 10.3 H8.3 V17.5 L1 16.5 Z M9.3 10.3 H18.5 V18.8 L9.3 17.6 Z" fill="#fff"/></svg>
<div class="a" style="left:226px;top:987px;width:350px;height:40px;background:#f0f0f0;border:1px solid #a8a8a8;border-bottom:none"></div>
<svg class="a" style="left:237px;top:996px" width="20" height="22" viewBox="0 0 20 22"><circle cx="11.5" cy="8" r="5.6" fill="none" stroke="#222" stroke-width="1.4"/><path d="M7.5 12 L1.5 19" stroke="#222" stroke-width="1.6"/></svg>
<div class="a t" style="left:267px;top:999px;font-size:15px;color:#333">Type here to search</div>
<svg class="a" style="left:590px;top:997px" width="20" height="18" viewBox="0 0 20 18"><g fill="none" stroke="#fff" stroke-width="1.3"><rect x="2" y="4" width="11" height="10"/><path d="M0.5 1 H14.5 M0.5 17 H14.5"/><path d="M18 1 V17"/></g><rect x="16.5" y="7" width="3" height="3" fill="#fff"/></svg>
<svg class="a" style="left:639px;top:996px" width="26" height="21" viewBox="0 0 26 21"><path d="M1 3 H9 L11 5 H24 V19 H1 Z" fill="#e4b33c"/><path d="M1 7 H24 V19 H1 Z" fill="#f7cf5a"/><path d="M7 19 V12 H18 V19 H15 V15 H10 V19 Z" fill="#3a8fd8"/></svg>
<svg class="a" style="left:689px;top:995px" width="26" height="23" viewBox="0 0 26 23"><rect x="1" y="5" width="24" height="17" rx="3" fill="#f6f6f6"/><path d="M8 6 V2 H18 V6" fill="none" stroke="#2ea0e0" stroke-width="1.6"/><rect x="8.5" y="9" width="4" height="4" fill="#f25022"/><rect x="13.5" y="9" width="4" height="4" fill="#7fba00"/><rect x="8.5" y="14" width="4" height="4" fill="#00a4ef"/><rect x="13.5" y="14" width="4" height="4" fill="#ffb900"/></svg>
<svg class="a" style="left:740px;top:996px" width="26" height="22" viewBox="0 0 26 22"><path d="M1 8 L13 1 L25 8 V21 H1 Z" fill="#1d6fc4"/><path d="M4 5 H22 V12 L13 17 L4 12 Z" fill="#f4f6f8"/><path d="M1 8 L13 15 L25 8 V21 H1 Z" fill="#30a8ee"/></svg>
<svg class="a" style="left:791px;top:995px" width="24" height="24" viewBox="0 0 24 24"><g fill="none" stroke="#f0f0f0" stroke-width="1.5"><path d="M12 1.5 L21.5 7 V17 L12 22.5 L2.5 17 V7 Z" stroke-dasharray="9 3"/><path d="M12 6 L17 9 V15 L12 18 L7 15 V9 Z M7 9 L12 12 L17 9 M12 12 V18"/></g></svg>
<svg class="a" style="left:840px;top:995px" width="27" height="26" viewBox="0 0 27 26"><circle cx="12.5" cy="12.5" r="11.5" fill="#db4437"/><path d="M12.5 1 A11.5 11.5 0 0 1 23 8 L12.5 8 Z" fill="#f4b400"/><path d="M2 7 L8 17 A11.5 11.5 0 0 1 2 7 Z" fill="#0f9d58"/><path d="M1.5 12 A11 11 0 0 0 12 24 L15 15 Z" fill="#0f9d58"/><circle cx="12.5" cy="12.5" r="4.8" fill="#4285f4" stroke="#fff" stroke-width="1.5"/><circle cx="18" cy="17.5" r="7" fill="#3a6ad8"/><path d="M15 19 L18 13.5 L21 19 Z" fill="#e07030"/></svg>
<svg class="a" style="left:889.7px;top:988px" width="30" height="32" viewBox="0 0 30 32"><use href="#zlogoR"/></svg>
<div class="a" style="left:834px;top:1024px;width:41px;height:3px;background:#8ac0ea"></div>
<div class="a" style="left:884px;top:1024px;width:41px;height:3px;background:#8ac0ea"></div>
<!-- remote tray -->
<div class="a" style="left:1477px;top:987px;width:25px;height:40px;background:#202327"></div>
<div class="a" style="left:1610px;top:987px;width:76px;height:40px;background:#1b1f25"></div>
<div class="a" style="left:1734px;top:987px;width:1px;height:40px;background:#4a5566"></div>
<svg class="a" style="left:1430px;top:995px" width="290" height="26" viewBox="1430 995 290 26"><g fill="none" stroke="#f2f2f2" stroke-width="1.2"><path d="M1433.5 1010 L1439.5 1004 L1445.5 1010"/><path d="M1457 1000 L1471.5 998 V1011 L1457 1013 Z"/><path d="M1462.5 1006 A3 3 0 0 1 1467 1004 M1467 1008 A3 3 0 0 1 1462.5 1009"/><rect x="1481.5" y="1002.5" width="14" height="8"/><path d="M1508 1011 A10 10 0 0 1 1519 1000 M1511 1011 A7 7 0 0 1 1519 1003.5 M1514 1011 A4 4 0 0 1 1519 1007"/><path d="M1554 1004 H1557 L1561 1000.5 V1013.5 L1557 1010 H1554 Z"/><path d="M1563.5 1004 A4 4 0 0 1 1563.5 1010 M1566 1001.5 A7 7 0 0 1 1566 1012.5 M1568.5 999 A10 10 0 0 1 1568.5 1015"/><path d="M1698.5 999.5 H1713.5 V1011 H1708 L1706 1013.5 L1704 1011 H1698.5 Z"/></g><rect x="1482.5" y="1003.5" width="8" height="6" fill="#f2f2f2"/><rect x="1496" y="1005" width="1.5" height="3" fill="#f2f2f2"/><circle cx="1469" cy="1011" r="2.6" fill="#2a7fd8"/><ellipse cx="1537" cy="1007" rx="6" ry="8.5" fill="#2b8ff0"/><path d="M1534.5 1003.5 L1539.5 1008.5 L1537 1011 V1002.5 L1539.5 1005 L1534.5 1010" fill="none" stroke="#fff" stroke-width="1"/></svg>
<div class="a t" style="left:1579px;top:1002px;font-size:12.5px;color:#f2f2f2">ENG</div>
<div class="a t" style="left:1610px;top:992.5px;width:76px;text-align:center;font-size:12px;color:#f2f2f2">14:34</div>
<div class="a t" style="left:1610px;top:1011.5px;width:76px;text-align:center;font-size:12px;color:#f2f2f2">12-12-2022</div>

<!-- LOCAL TASKBAR -->
<div class="a" style="left:0;top:1030px;width:1918px;height:50px;background:#222"></div>
<svg class="a" style="left:17px;top:1044px" width="22" height="22" viewBox="0 0 22 22"><path d="M0.5 3.3 L9 2.2 V10.3 H0.5 Z M10 2 L21 0.6 V10.3 H10 Z M0.5 11.3 H9 V19.6 L0.5 18.5 Z M10 11.3 H21 V21.4 L10 20 Z" fill="#fff"/></svg>
<div class="a" style="left:58px;top:1030px;width:430px;height:50px;background:#f0f0f0;border-bottom:1px solid #c8c8c8"></div>
<svg class="a" style="left:72px;top:1044px" width="24" height="24" viewBox="0 0 24 24"><circle cx="14" cy="9" r="6.8" fill="none" stroke="#222" stroke-width="1.5"/><path d="M9.2 13.8 L1.5 21.5" stroke="#222" stroke-width="1.7"/></svg>
<div class="a t" style="left:108px;top:1046px;font-size:18.5px;color:#2a2a2a">Type here to search</div>
<svg class="a" style="left:398px;top:1031px" width="74" height="48" viewBox="398 1031 74 48">
 <path d="M402.3 1065.3 C410 1058 420 1054 432 1056 L426 1068 C418 1070 410 1068 402.3 1065.3 Z" fill="#3b6a2a"/>
 <path d="M407 1046.2 C416 1046 426 1050 432 1054 L424 1060 C418 1056 412 1051 407 1046.2 Z" fill="#2f4a25"/>
 <path d="M467.9 1044.2 C462 1048 450 1050 446 1054 L450 1066 C458 1062 466 1054 467.9 1044.2 Z" fill="#3f5f2b"/>
 <circle cx="437.4" cy="1054.2" r="9" fill="#e23a2c"/>
 <path d="M437.4 1054.2 L435.1 1041.1 L420.3 1037.3 L424.3 1052.1 Z" fill="#d9271e"/>
 <path d="M437.4 1054.2 L441.2 1044.0 L432.3 1035.1 L429.0 1047.2 Z" fill="#f04a38"/>
 <path d="M437.4 1054.2 L446.9 1047.4 L444.3 1034.2 L434.1 1043.0 Z" fill="#e8352a"/>
 <path d="M437.4 1054.2 L451.0 1052.2 L455.4 1036.9 L440.0 1040.7 Z" fill="#f25a45"/>
 <path d="M437.4 1054.2 L441.4 1067.9 L457.7 1070.2 L451.7 1054.9 Z" fill="#d42a20"/>
 <path d="M437.4 1054.2 L430.7 1063.9 L437.7 1075.6 L444.4 1063.7 Z" fill="#e8352a"/>
 <path d="M437.4 1054.2 L425.8 1059.8 L426.1 1074.7 L438.9 1067.0 Z" fill="#c9221a"/>
 <path d="M437.4 1054.2 L428.8 1044.1 L414.1 1048.4 L425.1 1059.0 Z" fill="#ea3c2c"/>
 <path d="M437.4 1054.2 L426.0 1055.2 L421.7 1067.6 L434.6 1065.3 Z" fill="#f25a45"/>
 <circle cx="437.4" cy="1054.2" r="4.2" fill="#f2d266"/>
</svg>
<svg class="a" style="left:507px;top:1044px" width="22" height="22" viewBox="0 0 22 22"><circle cx="11" cy="11" r="8.6" fill="none" stroke="#fff" stroke-width="2.2"/></svg>
<svg class="a" style="left:566px;top:1044px" width="24" height="22" viewBox="0 0 24 22"><g fill="none" stroke="#fff" stroke-width="1.5"><rect x="2.5" y="5" width="12" height="12"/><path d="M1 1.5 H16 M1 20.5 H16 M21 1 V21"/></g><rect x="19" y="8" width="4" height="4" fill="#fff"/></svg>
<svg class="a" style="left:625px;top:1040px" width="32" height="32" viewBox="0 0 32 32"><defs><linearGradient id="eg1" x1="0" y1="0" x2="1" y2="1"><stop offset="0" stop-color="#2fb8e8"/><stop offset="1" stop-color="#1560b8"/></linearGradient><linearGradient id="eg2" x1="0" y1="0" x2="1" y2="0"><stop offset="0" stop-color="#35c1a8"/><stop offset="1" stop-color="#6ad46a"/></linearGradient></defs><circle cx="16" cy="16" r="15" fill="url(#eg1)"/><path d="M16 1 C25 1 31 8 31 15 C31 20 27 23 22 23 C18 23 15 21 15 18 C15 16 17 14 19 14 C22 14 23 16 23 16 C23 10 20 6 14 6 C8 6 3 11 2 14 C3 7 9 1 16 1 Z" fill="url(#eg2)"/><path d="M8 17 C8 24 13 29 20 29 C14 31 6 28 3 21 Z" fill="#1a4fa0"/></svg>
<svg class="a" style="left:686px;top:1041px" width="30" height="28" viewBox="0 0 30 28"><path d="M1 2 H11 L13 5 H29 V27 H1 Z" fill="#e4a93a"/><path d="M1 7 H29 V27 H1 Z" fill="#f5cf5e"/><path d="M8 27 V16 H22 V27 H18 V21 H12 V27 Z" fill="#3a8fd8"/></svg>
<svg class="a" style="left:745px;top:1040px" width="31" height="30" viewBox="0 0 31 30"><rect x="1" y="7" width="29" height="22" rx="4" fill="#f4f4f4"/><path d="M9 8 V2 H22 V8" fill="none" stroke="#2ea0e0" stroke-width="2"/><rect x="10" y="12" width="5" height="5" fill="#f25022"/><rect x="16" y="12" width="5" height="5" fill="#7fba00"/><rect x="10" y="18" width="5" height="5" fill="#00a4ef"/><rect x="16" y="18" width="5" height="5" fill="#ffb900"/></svg>
<svg class="a" style="left:806px;top:1041px" width="31" height="29" viewBox="0 0 31 29"><path d="M1 10 L15.5 1 L30 10 V28 H1 Z" fill="#1b65c0"/><path d="M4 7 H27 V16 L15.5 22 L4 16 Z" fill="#f4f6f8"/><path d="M1 11 L15.5 19 L30 11 V28 H1 Z" fill="#2aa6ee"/></svg>
<svg class="a" style="left:866px;top:1041px" width="28" height="29" viewBox="0 0 28 29"><g fill="none" stroke="#e8e8e8" stroke-width="1.8"><path d="M14 1.5 L26 8.5 V20.5 L14 27.5 L2 20.5 V8.5 Z" stroke-dasharray="11 3"/><path d="M14 7.5 L20 11 V18 L14 21.5 L8 18 V11 Z M8 11 L14 14.5 L20 11 M14 14.5 V21.5"/></g></svg>
<svg class="a" style="left:921.7px;top:1037.6px" width="30" height="32" viewBox="0 0 30 32"><use href="#zlogoT"/></svg>
<div class="a t" style="left:956px;top:1048.5px;font-size:15px;letter-spacing:-0.15px;color:#f2f2f2">Frida In-Session ...</div>
<div class="a" style="left:915px;top:1077px;width:165px;height:3px;background:#76b9ed"></div>
<div class="a" style="left:1090px;top:1077px;width:164px;height:3px;background:#76b9ed"></div>
<svg class="a" style="left:1096.7px;top:1037.6px" width="30" height="32" viewBox="0 0 30 32"><use href="#zlogoT"/></svg>
<div class="a t" style="left:1131px;top:1048.5px;font-size:15px;color:#f2f2f2">Files &amp;&amp; Folders</div>
<div class="a" style="left:1259px;top:1030px;width:175px;height:50px;background:#4c4c4c"></div>
<div class="a" style="left:1259px;top:1077px;width:175px;height:3px;background:#76b9ed"></div>
<svg class="a" style="left:1270.7px;top:1037.6px" width="30" height="32" viewBox="0 0 30 32"><use href="#zlogoT"/></svg>
<div class="a t" style="left:1304px;top:1048.5px;font-size:15px;letter-spacing:-0.2px;color:#f2f2f2">File Transfer - 5...</div>
<svg class="a" style="left:1454px;top:1041px" width="34" height="30" viewBox="0 0 34 30"><path d="M7 21 C2 21 1 16 4 14 C3 9 8 7 11 9 C13 3 22 2 25 8 C30 8 33 12 31 17 C33 20 30 22 27 21 Z" fill="#dfeaf4"/><path d="M7 20 C4 20 3 17 5 15 H30 C31 18 29 20 27 20 Z" fill="#a9c4de"/><path d="M11 21 C9 25 10 28 12 28 C14 28 15 25 11 21 Z M21 21 C19 25 20 28 22 28 C24 28 25 25 21 21 Z" fill="#2d6fe0"/></svg>
<div class="a t" style="left:1497px;top:1048px;font-size:16px;color:#f2f2f2">Hea...</div>
<svg class="a" style="left:1568px;top:1040px" width="190" height="32" viewBox="1568 1040 190 32"><g fill="none" stroke="#f2f2f2" stroke-width="1.4"><path d="M1572.5 1060 L1580 1052.5 L1587.5 1060"/><path d="M1600.5 1047 L1619 1045 V1061 L1600.5 1063 Z"/><path d="M1606 1055 A4 4 0 0 1 1612 1052 M1612 1057 A4 4 0 0 1 1606 1058"/><rect x="1631.5" y="1051.5" width="17" height="10"/><path d="M1664 1063 A14 14 0 0 1 1678 1049 M1668 1063 A10 10 0 0 1 1678 1053 M1672 1063 A6 6 0 0 1 1678 1057"/><path d="M1691 1052 H1695 L1700 1047 V1064 L1695 1060 H1691 Z"/><path d="M1703 1052 A5 5 0 0 1 1703 1059 M1706 1049 A9 9 0 0 1 1706 1062 M1709 1046 A13 13 0 0 1 1709 1065"/></g><rect x="1633" y="1053" width="14" height="7" fill="#f2f2f2"/><rect x="1649" y="1054" width="2" height="4" fill="#f2f2f2"/><circle cx="1678" cy="1063" r="1.5" fill="#f2f2f2"/><circle cx="1616" cy="1062" r="3.4" fill="#2a7fd8"/></svg>
<div class="a t" style="left:1723px;top:1048px;font-size:15px;color:#f2f2f2">ENG</div>
<div class="a t" style="left:1760px;top:1036px;width:92px;text-align:center;font-size:15px;color:#f2f2f2">14:34</div>
<div class="a t" style="left:1760px;top:1059px;width:92px;text-align:center;font-size:15px;color:#f2f2f2">12-12-2022</div>
<svg class="a" style="left:1864px;top:1040px" width="40" height="36" viewBox="0 0 40 36"><path d="M3 3 H27 V21 H12 L6 27 V21 H3 Z" fill="#f2f2f2"/><path d="M7 8 H23 M7 12 H23 M7 16 H18" stroke="#222" stroke-width="1.5"/><circle cx="27" cy="25" r="8" fill="#3c3c3c" stroke="#666" stroke-width="1"/><text x="27" y="30" font-family="Liberation Sans" font-weight="bold" font-size="13" fill="#fff" text-anchor="middle">4</text></svg>
<div class="a" style="left:1912px;top:1030px;width:1px;height:50px;background:#555"></div>

</body></html>
